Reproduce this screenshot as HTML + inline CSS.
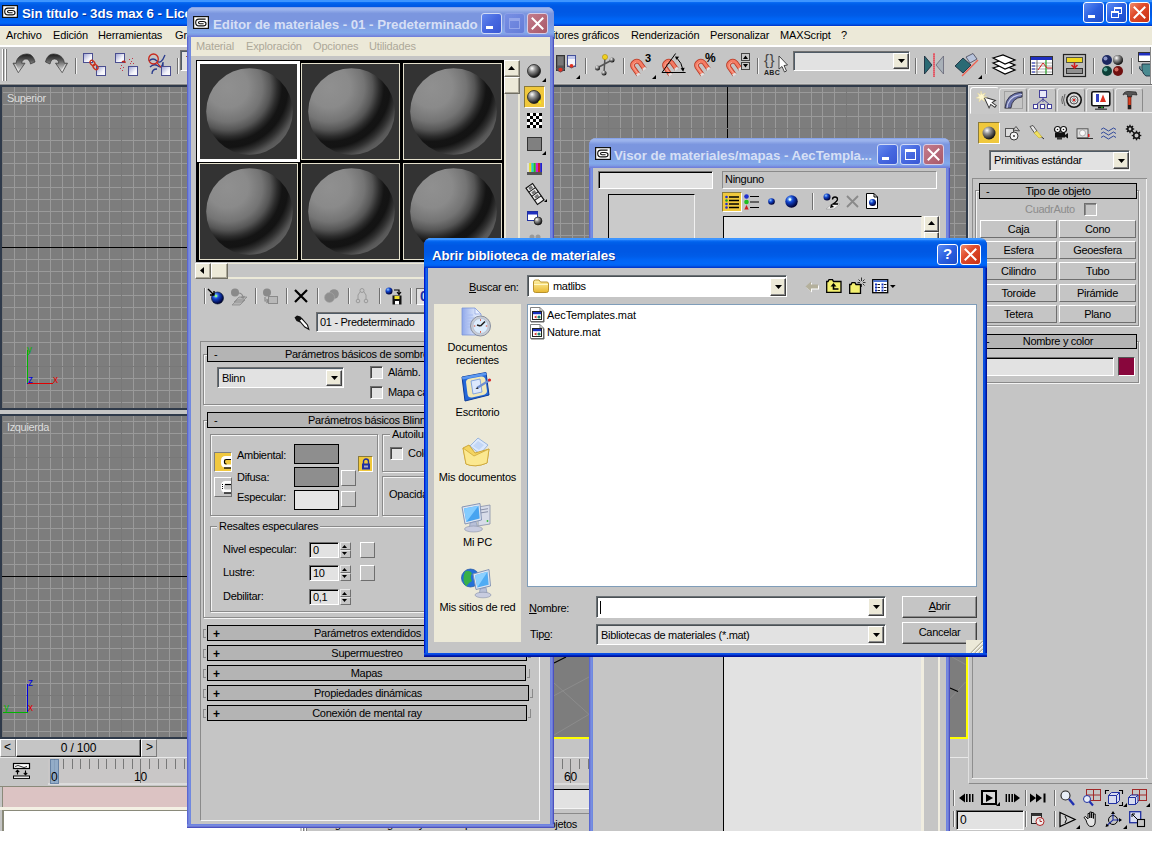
<!DOCTYPE html><html lang="es"><head><meta charset="utf-8"><title>3ds max 6</title><style>
*{box-sizing:border-box}
html,body{margin:0;padding:0}
body{background:#fff;width:1152px;height:864px;overflow:hidden;position:relative;font:11px "Liberation Sans",sans-serif;color:#000}
.a{position:absolute}
.t{position:absolute;white-space:nowrap;line-height:13px;letter-spacing:-0.3px}
.m{position:absolute;white-space:nowrap;line-height:13px;letter-spacing:-0.15px}
.tt{position:absolute;white-space:nowrap;font-weight:bold;font-size:13.3px;line-height:15px;color:#fff;letter-spacing:-0.05px;text-shadow:1px 1px 0 rgba(10,30,120,0.7)}
.c{text-align:center}
.btn{background:#c5c5c5;border:1px solid;border-color:#fff #6e6e6e #6e6e6e #fff;text-align:center;line-height:17px;letter-spacing:-0.3px}
.sunk{border:1px solid;border-color:#6e6e6e #fff #fff #6e6e6e}
.fld{background:#e2e2e2;border:1px solid;border-color:#707070 #fff #fff #707070;box-shadow:inset 1px 1px 0 #000}
.cmb{background:#e2e2e2;border:1px solid;border-color:#707070 #fff #fff #707070;box-shadow:inset 1px 1px 0 #4f5b66}
.roll{background:#b4b4b4;border:1px solid #000;text-align:center;line-height:15px;letter-spacing:-0.3px}
.grp{border:1px solid #8a8a8a;box-shadow:1px 1px 0 #f4f4f4, inset 1px 1px 0 #f4f4f4}
.vsep{position:absolute;width:2px;border-left:1px solid #707070;border-right:1px solid #f4f4f4}
.xpbtn{position:absolute;border:1px solid #fff;border-radius:3px}
svg{position:absolute;overflow:visible}
</style></head><body>
<div class="a mainwin" style="left:0px;top:0px;width:1152px;height:831px;background:#c5c5c5;overflow:hidden"></div>
<div class="a " style="left:0px;top:0px;width:1152px;height:26px;background:linear-gradient(180deg,#3d95ff 0%,#3d95ff 6%,#0a6cf4 9%,#0060ea 15%,#0058e4 25%,#0058e4 45%,#005ce8 60%,#0064f4 72%,#0068fa 86%,#0060f0 92%,#0048d8 96%,#0030c8 100%)"></div>
<svg style="left:2px;top:5px" width="16" height="13" viewBox="0 0 16 13"><rect x="0.6" y="0.6" width="14.8" height="11.8" fill="#fff" stroke="#111" stroke-width="1.2"/><path d="M12.6 3.1 H6 Q2.700 3.100 2.700 6.500 Q2.700 9.900 6 9.900 H10.200 Q13 9.900 13 7.700 Q13 5.500 10.200 5.500 H7 Q5.500 5.500 5.500 6.600 Q5.500 7.700 7 7.700 H10.600" fill="none" stroke="#111" stroke-width="1.15"/></svg>
<div class="a " style="left:22px;top:0px;width:165px;height:26px;overflow:hidden"><div class="tt" style="left:0px;top:6px;">Sin título - 3ds max 6 - Licencia autónoma</div></div>
<div class="xpbtn" style="left:1083px;top:2px;width:21px;height:21px;background:linear-gradient(135deg,#5c8cf4 0%,#2a5fe0 50%,#1d4cc8 100%);"><div class="a" style="left:4px;bottom:4px;width:7px;height:3px;background:#fff"></div></div>
<div class="xpbtn" style="left:1106px;top:2px;width:21px;height:21px;background:linear-gradient(135deg,#5c8cf4 0%,#2a5fe0 50%,#1d4cc8 100%);"><div class="a" style="left:7px;top:4px;width:8px;height:7px;border:1px solid #fff;border-top-width:2px"></div><div class="a" style="left:4px;top:8px;width:8px;height:7px;border:1px solid #fff;border-top-width:2px;background:#2a5fe0"></div></div>
<div class="xpbtn" style="left:1129px;top:2px;width:21px;height:21px;background:linear-gradient(135deg,#f08c6c 0%,#e04c2c 40%,#c83014 100%);"><svg style="left:0;top:0" width="19" height="19" viewBox="0 0 19 19"><path d="M4.5 4.5L14.5 14.5M14.5 4.5L4.5 14.5" stroke="#fff" stroke-width="2" stroke-linecap="square"/></svg></div>
<div class="a " style="left:0px;top:26px;width:1152px;height:19px;background:#ece9d8;border-top:1px solid #fbf4da"></div>
<div class="m" style="left:6px;top:29px;">Archivo</div>
<div class="m" style="left:53px;top:29px;">Edición</div>
<div class="m" style="left:98px;top:29px;">Herramientas</div>
<div class="m" style="left:175px;top:29px;">Grupo</div>
<div class="m" style="left:631px;top:29px;">Renderización</div>
<div class="m" style="left:710px;top:29px;">Personalizar</div>
<div class="m" style="left:780px;top:29px;">MAXScript</div>
<div class="m" style="left:841px;top:29px;">?</div>
<div class="a " style="left:419px;top:29px;width:200px;height:13px;text-align:right;white-space:nowrap;line-height:13px;letter-spacing:-0.15px">Editores gráficos</div>
<div class="a " style="left:0px;top:45px;width:1152px;height:2px;background:#fff"></div>
<div class="a " style="left:0px;top:83px;width:1152px;height:1px;background:#cbcbcb"></div>
<div class="a " style="left:0px;top:84px;width:968px;height:1px;background:#8c8c8c"></div>
<div class="a " style="left:968px;top:84px;width:184px;height:1px;background:#6e6e6e"></div>
<div class="a " style="left:2px;top:49px;width:2px;height:32px;border-left:1px solid #fff;border-right:1px solid #7a7a7a"></div>
<div class="a " style="left:5px;top:49px;width:2px;height:32px;border-left:1px solid #fff;border-right:1px solid #7a7a7a"></div>
<div class="vsep" style="left:75px;top:58px;height:16px"></div>
<div class="vsep" style="left:177px;top:58px;height:16px"></div>
<div class="vsep" style="left:585px;top:58px;height:16px"></div>
<div class="vsep" style="left:623px;top:58px;height:16px"></div>
<div class="vsep" style="left:757px;top:58px;height:16px"></div>
<div class="vsep" style="left:915px;top:58px;height:16px"></div>
<div class="vsep" style="left:985px;top:58px;height:16px"></div>
<div class="vsep" style="left:1023px;top:58px;height:16px"></div>
<div class="vsep" style="left:1093px;top:58px;height:16px"></div>
<div class="vsep" style="left:1131px;top:58px;height:16px"></div>
<svg width="0" height="0" style="left:0;top:0"><defs><linearGradient id="gUndo" x1="0" y1="0" x2="0" y2="1"><stop offset="0" stop-color="#1c1c1c"/><stop offset="0.35" stop-color="#5a5a5a"/><stop offset="0.7" stop-color="#b0b0b0"/><stop offset="1" stop-color="#f0f0f0"/></linearGradient><linearGradient id="gBox" x1="0" y1="0" x2="1" y2="1"><stop offset="0" stop-color="#9aa0d0"/><stop offset="0.6" stop-color="#f4f4fa"/><stop offset="1" stop-color="#fff"/></linearGradient><radialGradient id="gSph" cx="0.25" cy="0.22" r="0.95"><stop offset="0" stop-color="#909090"/><stop offset="0.25" stop-color="#8a8a8a"/><stop offset="0.42" stop-color="#747474"/><stop offset="0.52" stop-color="#565656"/><stop offset="0.6" stop-color="#2c2c2c"/><stop offset="0.66" stop-color="#141414"/><stop offset="0.73" stop-color="#131313"/><stop offset="0.8" stop-color="#303030"/><stop offset="0.87" stop-color="#565656"/><stop offset="0.95" stop-color="#666666"/><stop offset="1" stop-color="#6a6a6a"/></radialGradient><radialGradient id="gBall" cx="0.35" cy="0.3" r="0.7"><stop offset="0" stop-color="#fff"/><stop offset="0.35" stop-color="#999"/><stop offset="1" stop-color="#111"/></radialGradient><radialGradient id="gBlue" cx="0.35" cy="0.3" r="0.7"><stop offset="0" stop-color="#9cf"/><stop offset="0.4" stop-color="#14c"/><stop offset="1" stop-color="#003"/></radialGradient><linearGradient id="gFolder" x1="0" y1="0" x2="0" y2="1"><stop offset="0" stop-color="#fff3a8"/><stop offset="1" stop-color="#e8b830"/></linearGradient></defs></svg>
<svg style="left:13px;top:54px" width="23" height="20" viewBox="0 0 23 20"><path d="M5.300 18.700 L0 9.200 L3.200 9.200 C3.500 3 9 0 14 0 C18.500 0 21 3.500 22 8 L17.500 10 C17 7 15.500 5 13 5 C10.500 5 8.800 7 8.700 9.200 L12 9.200 Z" fill="url(#gUndo)" stroke="#333" stroke-width="0.700"/><path d="M2 10 L5.500 16.500" stroke="#fff" stroke-width="0.800" opacity="0.700"/></svg>
<svg style="left:45px;top:54px" width="23" height="20" viewBox="0 0 23 20"><g transform="translate(22.500,0) scale(-1,1)"><path d="M5.300 18.700 L0 9.200 L3.200 9.200 C3.500 3 9 0 14 0 C18.500 0 21 3.500 22 8 L17.500 10 C17 7 15.500 5 13 5 C10.500 5 8.800 7 8.700 9.200 L12 9.200 Z" fill="url(#gUndo)" stroke="#333" stroke-width="0.700"/><path d="M2 10 L5.500 16.500" stroke="#fff" stroke-width="0.800" opacity="0.700"/></g></svg>
<svg style="left:83px;top:53px" width="23" height="24" viewBox="0 0 23 24"><rect x="0.5" y="0.5" width="9" height="9" fill="url(#gBox)" stroke="#4a4e90" stroke-width="1"/><rect x="13.5" y="13.5" width="9" height="9" fill="url(#gBox)" stroke="#4a4e90" stroke-width="1"/><g fill="none" stroke="#c8301c" stroke-width="1.300"><ellipse cx="9.500" cy="10" rx="2" ry="3" transform="rotate(-40 9.500 10)"/><ellipse cx="12.500" cy="14" rx="2" ry="3" transform="rotate(-40 12.500 14)"/></g></svg>
<svg style="left:115px;top:53px" width="23" height="24" viewBox="0 0 23 24"><rect x="0.5" y="0.5" width="9" height="9" fill="url(#gBox)" stroke="#4a4e90" stroke-width="1"/><rect x="13.5" y="13.5" width="9" height="9" fill="url(#gBox)" stroke="#4a4e90" stroke-width="1"/><path d="M7 9 q3 -2 3 1" fill="none" stroke="#c0281c" stroke-width="1.6"/><g fill="#c0384a"><rect x="6" y="12" width="1" height="1"/><rect x="8" y="14" width="1" height="1"/><rect x="5" y="15" width="1" height="1"/><rect x="7" y="17" width="1" height="1"/><rect x="14" y="6" width="1" height="1"/><rect x="16" y="8" width="1" height="1"/><rect x="17" y="5" width="1" height="1"/><rect x="15" y="10" width="1" height="1"/><rect x="18" y="10" width="1" height="1"/></g></svg>
<svg style="left:148px;top:53px" width="23" height="24" viewBox="0 0 23 24"><path d="M1 8 q4 -4 8 0 t8 -6" fill="none" stroke="#283a8c" stroke-width="1.3"/><path d="M2 14 q4 -4 8 -1 t5 -4 v4" fill="none" stroke="#283a8c" stroke-width="1.3"/><path d="M4 21 q0 -5 5 -5" fill="none" stroke="#283a8c" stroke-width="1.3"/><ellipse cx="5.500" cy="6" rx="4.800" ry="5" fill="none" stroke="#c8281c" stroke-width="1.300"/><path d="M9 9.500 q2 3 4.500 5" fill="none" stroke="#c8281c" stroke-width="1.300"/><rect x="13.5" y="13.5" width="9" height="9" fill="url(#gBox)" stroke="#4a4e90" stroke-width="1"/></svg>
<div class="a cmb" style="left:180px;top:50px;width:40px;height:21px;"></div>
<div class="t" style="left:186px;top:54px;">Todo</div>
<svg style="left:556px;top:55px" width="22" height="22" viewBox="0 0 22 22"><rect x="0.5" y="0.5" width="8" height="15" fill="#555" stroke="#333"/><rect x="1.5" y="1.5" width="6" height="9" fill="#777"/><circle cx="4.5" cy="15" r="2.2" fill="#e03020"/><path d="M0 13 q4.5 8 9 0" fill="none" stroke="#556" stroke-width="0.8"/><rect x="11.5" y="0.5" width="8" height="11" fill="#f4f4fa" stroke="#44509a"/><rect x="12" y="1" width="7" height="3" fill="#c0c8ec"/><circle cx="15.5" cy="11" r="2" fill="#e03020"/><path d="M11 9 q4.5 8 9 0" fill="none" stroke="#556" stroke-width="0.8"/></svg>
<svg style="left:576px;top:75px" width="4" height="4" viewBox="0 0 4 4"><path d="M4 0V4H0Z" fill="#000"/></svg>
<svg style="left:595px;top:54px" width="20" height="22" viewBox="0 0 20 22"><path d="M10 3 L9 19 M2 14 L17 6" stroke="#555" stroke-width="1.5"/><circle cx="10" cy="3" r="2.6" fill="#f0d020" stroke="#a08000" stroke-width="0.5"/><circle cx="2.5" cy="14" r="2.5" fill="url(#gBall)"/><circle cx="17" cy="6" r="2.5" fill="url(#gBall)"/><circle cx="9" cy="19" r="2.5" fill="url(#gBall)"/></svg>
<svg style="left:630px;top:59px" width="18" height="18" viewBox="0 0 18 18"><g fill="none"><path d="M8.5 15.8 L3 8.2 A4.2 4.2 0 0 1 9.8 3.5 L14.6 10.2" stroke="#b83824" stroke-width="4.6"/><path d="M8.5 15.8 L3 8.2 A4.2 4.2 0 0 1 9.8 3.5 L14.6 10.2" stroke="#f47c64" stroke-width="3"/><path d="M7.6 14.2 L3.4 8.4 A3.6 3.6 0 0 1 6 3.4" stroke="#f8a898" stroke-width="1"/><path d="M8.8 16.2 L7.6 14.5 M14.9 10.6 L13.7 8.9" stroke="#fff" stroke-width="3.6"/><path d="M8.8 16.2 L7.6 14.5 M14.9 10.6 L13.7 8.9" stroke="#888" stroke-width="4.6" stroke-opacity="0.25"/></g></svg>
<div class="a" style="left:645px;top:52px;font:bold 11px/12px 'Liberation Sans',sans-serif">3</div>
<svg style="left:652px;top:75px" width="4" height="4" viewBox="0 0 4 4"><path d="M4 0V4H0Z" fill="#000"/></svg>
<svg style="left:662px;top:59px" width="18" height="18" viewBox="0 0 18 18"><g fill="none"><path d="M8.5 15.8 L3 8.2 A4.2 4.2 0 0 1 9.8 3.5 L14.6 10.2" stroke="#b83824" stroke-width="4.6"/><path d="M8.5 15.8 L3 8.2 A4.2 4.2 0 0 1 9.8 3.5 L14.6 10.2" stroke="#f47c64" stroke-width="3"/><path d="M7.6 14.2 L3.4 8.4 A3.6 3.6 0 0 1 6 3.4" stroke="#f8a898" stroke-width="1"/><path d="M8.8 16.2 L7.6 14.5 M14.9 10.6 L13.7 8.9" stroke="#fff" stroke-width="3.6"/><path d="M8.8 16.2 L7.6 14.5 M14.9 10.6 L13.7 8.9" stroke="#888" stroke-width="4.6" stroke-opacity="0.25"/></g><path d="M0 13.5 H23.600 M0 13.500 L13.600 -5.500" stroke="#000" stroke-width="1" fill="none"/><path d="M14.500 -1.500 Q20 4 21 11" stroke="#000" stroke-width="1" fill="none"/><path d="M13 -2.500 l4.200 0.300 l-2.800 3z M21.200 12.800 l-2.600 -3.600 l4 -0.400z" fill="#000"/></svg>
<svg style="left:694px;top:59px" width="18" height="18" viewBox="0 0 18 18"><g fill="none"><path d="M8.5 15.8 L3 8.2 A4.2 4.2 0 0 1 9.8 3.5 L14.6 10.2" stroke="#b83824" stroke-width="4.6"/><path d="M8.5 15.8 L3 8.2 A4.2 4.2 0 0 1 9.8 3.5 L14.6 10.2" stroke="#f47c64" stroke-width="3"/><path d="M7.6 14.2 L3.4 8.4 A3.6 3.6 0 0 1 6 3.4" stroke="#f8a898" stroke-width="1"/><path d="M8.8 16.2 L7.6 14.5 M14.9 10.6 L13.7 8.9" stroke="#fff" stroke-width="3.6"/><path d="M8.8 16.2 L7.6 14.5 M14.9 10.6 L13.7 8.9" stroke="#888" stroke-width="4.6" stroke-opacity="0.25"/></g></svg>
<div class="a" style="left:705px;top:52px;font:bold 12px/12px 'Liberation Sans',sans-serif;letter-spacing:-0.5px">%</div>
<svg style="left:726px;top:59px" width="18" height="18" viewBox="0 0 18 18"><g fill="none"><path d="M8.5 15.8 L3 8.2 A4.2 4.2 0 0 1 9.8 3.5 L14.6 10.2" stroke="#b83824" stroke-width="4.6"/><path d="M8.5 15.8 L3 8.2 A4.2 4.2 0 0 1 9.8 3.5 L14.6 10.2" stroke="#f47c64" stroke-width="3"/><path d="M7.6 14.2 L3.4 8.4 A3.6 3.6 0 0 1 6 3.4" stroke="#f8a898" stroke-width="1"/><path d="M8.8 16.2 L7.6 14.5 M14.9 10.6 L13.7 8.9" stroke="#fff" stroke-width="3.6"/><path d="M8.8 16.2 L7.6 14.5 M14.9 10.6 L13.7 8.9" stroke="#888" stroke-width="4.6" stroke-opacity="0.25"/></g></svg>
<div class="a " style="left:741px;top:53px;width:9px;height:8px;background:#c8c8c8;border:1px solid #444"><svg style="left:1px;top:1px" width="5" height="4"><path d="M0 4L2.500 0.500L5 4Z" fill="#000"/></svg></div>
<div class="a " style="left:741px;top:62px;width:9px;height:8px;background:#c8c8c8;border:1px solid #444"><svg style="left:1px;top:1px" width="5" height="4"><path d="M0 0L2.500 3.500L5 0Z" fill="#000"/></svg></div>
<div class="a" style="left:764px;top:50px;font:15px/20px 'Liberation Sans',sans-serif;color:#444;letter-spacing:0.5px">{}</div>
<div class="a" style="left:764px;top:69px;font:bold 7px/8px 'Liberation Sans',sans-serif;color:#222;letter-spacing:0.3px">ABC</div>
<svg style="left:778px;top:56px" width="10" height="18" viewBox="0 0 10 18"><path d="M1 0 L1 13 L4 10.5 L6.5 16 L8.5 15 L6 9.5 L9.5 9 Z" fill="#fff" stroke="#333" stroke-width="0.9"/></svg>
<div class="a cmb" style="left:793px;top:51px;width:117px;height:20px;"></div>
<div class="a " style="left:893px;top:53px;width:16px;height:16px;background:#ece9d8;border:1px solid;border-color:#fff #404040 #404040 #fff;box-shadow:inset -1px -1px 0 #8a8a8a"><svg style="left:3.5px;top:5.0px" width="7" height="4"><path d="M0 0H7L3.5 4Z" fill="#000"/></svg></div>
<svg style="left:923px;top:53px" width="22" height="24" viewBox="0 0 22 24"><path d="M1.5 3 V21 L9 12Z" fill="#2a6a74" stroke="#123" stroke-width="0.8"/><path d="M20.5 3 V21 L13 12Z" fill="#a8b0b8" stroke="#667" stroke-width="0.8"/><path d="M11 0 V24" stroke="#e04050" stroke-width="1.6"/><path d="M11 0 V24" stroke="#f8c0c0" stroke-width="0.5" stroke-dasharray="1 1"/></svg>
<svg style="left:954px;top:53px" width="24" height="24" viewBox="0 0 24 24"><path d="M1 13 L9 5 L17 12 L9 20Z" fill="#2a6a74" stroke="#123" stroke-width="0.8"/><path d="M12 4 L19 0.5 L23 6 L16 10Z" fill="#b8c4dc" stroke="#445" stroke-width="0.8"/><path d="M8 23 L24 7" stroke="#f06050" stroke-width="1.3"/></svg>
<svg style="left:978px;top:75px" width="4" height="4" viewBox="0 0 4 4"><path d="M4 0V4H0Z" fill="#000"/></svg>
<svg style="left:992px;top:54px" width="24" height="22" viewBox="0 0 24 22"><g fill="#fff" stroke="#000" stroke-width="1.2"><path d="M1 14 L11 11 L23 16 L13 20Z"/><path d="M1 9 L11 6 L23 11 L13 15Z"/><path d="M1 4 L11 1 L23 6 L13 10Z"/></g></svg>
<svg style="left:1030px;top:56px" width="23" height="19" viewBox="0 0 23 19"><rect x="0.5" y="0.5" width="22" height="18" fill="#fff" stroke="#333"/><rect x="1" y="1" width="21" height="3" fill="#2030c0"/><path d="M1 7H22M1 10H22M1 13H22M1 16H22" stroke="#888" stroke-width="0.7"/><path d="M7 4V18" stroke="#555" stroke-width="0.8"/><path d="M16 4V18" stroke="#20a020" stroke-width="1.2"/><path d="M8 14 L13 7 L17 12 L22 12" fill="none" stroke="#d02020" stroke-width="1"/><path d="M2 7h3M2 10h3M2 13h3M2 16h3" stroke="#2030c0" stroke-width="1"/></svg>
<svg style="left:1063px;top:54px" width="23" height="23" viewBox="0 0 23 23"><rect x="0.5" y="0.5" width="22" height="22" fill="#bdbdbd" stroke="#222" stroke-width="1.2"/><rect x="3.5" y="3.5" width="16" height="5" fill="#f0d820" stroke="#554"/><rect x="3.5" y="14.5" width="16" height="5" fill="#909090" stroke="#333"/><path d="M11.5 8.5 V13 M8.5 11 L11.5 14 L14.5 11" stroke="#d02020" stroke-width="1.6" fill="none"/></svg>
<svg style="left:1101px;top:54px" width="22" height="22" viewBox="0 0 22 22"><circle cx="6" cy="6" r="5" fill="#1c2860"/><circle cx="4.5" cy="4.5" r="2" fill="#a8b0e0" opacity="0.8"/><circle cx="17" cy="6" r="5" fill="#707070"/><circle cx="15.5" cy="4.5" r="2" fill="#fff" opacity="0.8"/><circle cx="6" cy="17" r="5" fill="#0c4038"/><circle cx="4.5" cy="15.5" r="2" fill="#70c0b0" opacity="0.8"/><circle cx="17" cy="17" r="5" fill="#701010"/><circle cx="15.5" cy="15.5" r="2" fill="#f08070" opacity="0.8"/><circle cx="17" cy="6" r="5" fill="url(#gBall)"/></svg>
<svg style="left:1138px;top:52px" width="14" height="26" viewBox="0 0 14 26"><rect x="0.5" y="0.5" width="14" height="9" fill="#fff" stroke="#333"/><rect x="1" y="1" width="13" height="2.5" fill="#2030c0"/><path d="M2 14 q-2 3 2 5 M4 12 h10 v12 h-6 q-5 -3 -4 -12Z" fill="#4a8a90" stroke="#123" stroke-width="0.8"/></svg>
<div class="a " style="left:1150px;top:47px;width:2px;height:37px;border-left:1px solid #8a8a8a;border-right:1px solid #fff"></div>
<div class="a " style="left:0px;top:85px;width:484px;height:325px;background:#7d7d7d;border:2px solid #2f3a4a;overflow:hidden"><div class="a" style="left:12px;top:0;width:1px;height:100%;background:#9a9a9a"></div><div class="a" style="left:24px;top:0;width:1px;height:100%;background:#9a9a9a"></div><div class="a" style="left:36px;top:0;width:1px;height:100%;background:#9a9a9a"></div><div class="a" style="left:48px;top:0;width:1px;height:100%;background:#9a9a9a"></div><div class="a" style="left:60px;top:0;width:1px;height:100%;background:#9a9a9a"></div><div class="a" style="left:71px;top:0;width:1px;height:100%;background:#9a9a9a"></div><div class="a" style="left:83px;top:0;width:1px;height:100%;background:#9a9a9a"></div><div class="a" style="left:95px;top:0;width:1px;height:100%;background:#9a9a9a"></div><div class="a" style="left:107px;top:0;width:1px;height:100%;background:#9a9a9a"></div><div class="a" style="left:131px;top:0;width:1px;height:100%;background:#9a9a9a"></div><div class="a" style="left:143px;top:0;width:1px;height:100%;background:#9a9a9a"></div><div class="a" style="left:155px;top:0;width:1px;height:100%;background:#9a9a9a"></div><div class="a" style="left:167px;top:0;width:1px;height:100%;background:#9a9a9a"></div><div class="a" style="left:179px;top:0;width:1px;height:100%;background:#9a9a9a"></div><div class="a" style="left:191px;top:0;width:1px;height:100%;background:#9a9a9a"></div><div class="a" style="left:203px;top:0;width:1px;height:100%;background:#9a9a9a"></div><div class="a" style="left:215px;top:0;width:1px;height:100%;background:#9a9a9a"></div><div class="a" style="left:227px;top:0;width:1px;height:100%;background:#9a9a9a"></div><div class="a" style="left:250px;top:0;width:1px;height:100%;background:#9a9a9a"></div><div class="a" style="left:262px;top:0;width:1px;height:100%;background:#9a9a9a"></div><div class="a" style="left:274px;top:0;width:1px;height:100%;background:#9a9a9a"></div><div class="a" style="left:286px;top:0;width:1px;height:100%;background:#9a9a9a"></div><div class="a" style="left:298px;top:0;width:1px;height:100%;background:#9a9a9a"></div><div class="a" style="left:310px;top:0;width:1px;height:100%;background:#9a9a9a"></div><div class="a" style="left:322px;top:0;width:1px;height:100%;background:#9a9a9a"></div><div class="a" style="left:334px;top:0;width:1px;height:100%;background:#9a9a9a"></div><div class="a" style="left:346px;top:0;width:1px;height:100%;background:#9a9a9a"></div><div class="a" style="left:370px;top:0;width:1px;height:100%;background:#9a9a9a"></div><div class="a" style="left:382px;top:0;width:1px;height:100%;background:#9a9a9a"></div><div class="a" style="left:394px;top:0;width:1px;height:100%;background:#9a9a9a"></div><div class="a" style="left:406px;top:0;width:1px;height:100%;background:#9a9a9a"></div><div class="a" style="left:417px;top:0;width:1px;height:100%;background:#9a9a9a"></div><div class="a" style="left:429px;top:0;width:1px;height:100%;background:#9a9a9a"></div><div class="a" style="left:441px;top:0;width:1px;height:100%;background:#9a9a9a"></div><div class="a" style="left:453px;top:0;width:1px;height:100%;background:#9a9a9a"></div><div class="a" style="left:465px;top:0;width:1px;height:100%;background:#9a9a9a"></div><div class="a" style="left:0;top:5px;height:1px;width:100%;background:#9a9a9a"></div><div class="a" style="left:0;top:17px;height:1px;width:100%;background:#9a9a9a"></div><div class="a" style="left:0;top:29px;height:1px;width:100%;background:#9a9a9a"></div><div class="a" style="left:0;top:53px;height:1px;width:100%;background:#9a9a9a"></div><div class="a" style="left:0;top:65px;height:1px;width:100%;background:#9a9a9a"></div><div class="a" style="left:0;top:76px;height:1px;width:100%;background:#9a9a9a"></div><div class="a" style="left:0;top:88px;height:1px;width:100%;background:#9a9a9a"></div><div class="a" style="left:0;top:100px;height:1px;width:100%;background:#9a9a9a"></div><div class="a" style="left:0;top:112px;height:1px;width:100%;background:#9a9a9a"></div><div class="a" style="left:0;top:124px;height:1px;width:100%;background:#9a9a9a"></div><div class="a" style="left:0;top:136px;height:1px;width:100%;background:#9a9a9a"></div><div class="a" style="left:0;top:148px;height:1px;width:100%;background:#9a9a9a"></div><div class="a" style="left:0;top:172px;height:1px;width:100%;background:#9a9a9a"></div><div class="a" style="left:0;top:184px;height:1px;width:100%;background:#9a9a9a"></div><div class="a" style="left:0;top:196px;height:1px;width:100%;background:#9a9a9a"></div><div class="a" style="left:0;top:208px;height:1px;width:100%;background:#9a9a9a"></div><div class="a" style="left:0;top:220px;height:1px;width:100%;background:#9a9a9a"></div><div class="a" style="left:0;top:232px;height:1px;width:100%;background:#9a9a9a"></div><div class="a" style="left:0;top:244px;height:1px;width:100%;background:#9a9a9a"></div><div class="a" style="left:0;top:255px;height:1px;width:100%;background:#9a9a9a"></div><div class="a" style="left:0;top:267px;height:1px;width:100%;background:#9a9a9a"></div><div class="a" style="left:0;top:291px;height:1px;width:100%;background:#9a9a9a"></div><div class="a" style="left:0;top:303px;height:1px;width:100%;background:#9a9a9a"></div><div class="a" style="left:0;top:315px;height:1px;width:100%;background:#9a9a9a"></div><div class="a" style="left:0px;top:0;width:1px;height:100%;background:#787878"></div><div class="a" style="left:119px;top:0;width:1px;height:100%;background:#787878"></div><div class="a" style="left:239px;top:0;width:1px;height:100%;background:#000"></div><div class="a" style="left:358px;top:0;width:1px;height:100%;background:#787878"></div><div class="a" style="left:477px;top:0;width:1px;height:100%;background:#787878"></div><div class="a" style="left:0;top:41px;height:1px;width:100%;background:#787878"></div><div class="a" style="left:0;top:160px;height:1px;width:100%;background:#000"></div><div class="a" style="left:0;top:279px;height:1px;width:100%;background:#787878"></div><div class="t" style="left:5px;top:5px;color:#dcdcdc;letter-spacing:-0.35px">Superior</div><div class="a" style="left:25px;top:263px;width:1px;height:33px;background:#00b400"></div><div class="a" style="left:25px;top:296px;width:26px;height:1px;background:#e00000"></div><div class="a" style="left:25px;top:296px;width:1px;height:1px;background:#0000e0"></div><div class="t" style="left:26px;top:288px;color:#0000e0;font-size:10px;line-height:10px">z</div><div class="t" style="left:51px;top:288px;color:#e00000;font-size:10px;line-height:10px">x</div><div class="t" style="left:25px;top:258px;color:#00b400;font-size:10px;line-height:10px">y</div></div>
<div class="a " style="left:0px;top:414px;width:484px;height:325px;background:#7d7d7d;border:2px solid #2f3a4a;overflow:hidden"><div class="a" style="left:12px;top:0;width:1px;height:100%;background:#9a9a9a"></div><div class="a" style="left:24px;top:0;width:1px;height:100%;background:#9a9a9a"></div><div class="a" style="left:36px;top:0;width:1px;height:100%;background:#9a9a9a"></div><div class="a" style="left:48px;top:0;width:1px;height:100%;background:#9a9a9a"></div><div class="a" style="left:60px;top:0;width:1px;height:100%;background:#9a9a9a"></div><div class="a" style="left:71px;top:0;width:1px;height:100%;background:#9a9a9a"></div><div class="a" style="left:83px;top:0;width:1px;height:100%;background:#9a9a9a"></div><div class="a" style="left:95px;top:0;width:1px;height:100%;background:#9a9a9a"></div><div class="a" style="left:107px;top:0;width:1px;height:100%;background:#9a9a9a"></div><div class="a" style="left:131px;top:0;width:1px;height:100%;background:#9a9a9a"></div><div class="a" style="left:143px;top:0;width:1px;height:100%;background:#9a9a9a"></div><div class="a" style="left:155px;top:0;width:1px;height:100%;background:#9a9a9a"></div><div class="a" style="left:167px;top:0;width:1px;height:100%;background:#9a9a9a"></div><div class="a" style="left:179px;top:0;width:1px;height:100%;background:#9a9a9a"></div><div class="a" style="left:191px;top:0;width:1px;height:100%;background:#9a9a9a"></div><div class="a" style="left:203px;top:0;width:1px;height:100%;background:#9a9a9a"></div><div class="a" style="left:215px;top:0;width:1px;height:100%;background:#9a9a9a"></div><div class="a" style="left:227px;top:0;width:1px;height:100%;background:#9a9a9a"></div><div class="a" style="left:250px;top:0;width:1px;height:100%;background:#9a9a9a"></div><div class="a" style="left:262px;top:0;width:1px;height:100%;background:#9a9a9a"></div><div class="a" style="left:274px;top:0;width:1px;height:100%;background:#9a9a9a"></div><div class="a" style="left:286px;top:0;width:1px;height:100%;background:#9a9a9a"></div><div class="a" style="left:298px;top:0;width:1px;height:100%;background:#9a9a9a"></div><div class="a" style="left:310px;top:0;width:1px;height:100%;background:#9a9a9a"></div><div class="a" style="left:322px;top:0;width:1px;height:100%;background:#9a9a9a"></div><div class="a" style="left:334px;top:0;width:1px;height:100%;background:#9a9a9a"></div><div class="a" style="left:346px;top:0;width:1px;height:100%;background:#9a9a9a"></div><div class="a" style="left:370px;top:0;width:1px;height:100%;background:#9a9a9a"></div><div class="a" style="left:382px;top:0;width:1px;height:100%;background:#9a9a9a"></div><div class="a" style="left:394px;top:0;width:1px;height:100%;background:#9a9a9a"></div><div class="a" style="left:406px;top:0;width:1px;height:100%;background:#9a9a9a"></div><div class="a" style="left:417px;top:0;width:1px;height:100%;background:#9a9a9a"></div><div class="a" style="left:429px;top:0;width:1px;height:100%;background:#9a9a9a"></div><div class="a" style="left:441px;top:0;width:1px;height:100%;background:#9a9a9a"></div><div class="a" style="left:453px;top:0;width:1px;height:100%;background:#9a9a9a"></div><div class="a" style="left:465px;top:0;width:1px;height:100%;background:#9a9a9a"></div><div class="a" style="left:0;top:5px;height:1px;width:100%;background:#9a9a9a"></div><div class="a" style="left:0;top:17px;height:1px;width:100%;background:#9a9a9a"></div><div class="a" style="left:0;top:29px;height:1px;width:100%;background:#9a9a9a"></div><div class="a" style="left:0;top:53px;height:1px;width:100%;background:#9a9a9a"></div><div class="a" style="left:0;top:65px;height:1px;width:100%;background:#9a9a9a"></div><div class="a" style="left:0;top:76px;height:1px;width:100%;background:#9a9a9a"></div><div class="a" style="left:0;top:88px;height:1px;width:100%;background:#9a9a9a"></div><div class="a" style="left:0;top:100px;height:1px;width:100%;background:#9a9a9a"></div><div class="a" style="left:0;top:112px;height:1px;width:100%;background:#9a9a9a"></div><div class="a" style="left:0;top:124px;height:1px;width:100%;background:#9a9a9a"></div><div class="a" style="left:0;top:136px;height:1px;width:100%;background:#9a9a9a"></div><div class="a" style="left:0;top:148px;height:1px;width:100%;background:#9a9a9a"></div><div class="a" style="left:0;top:172px;height:1px;width:100%;background:#9a9a9a"></div><div class="a" style="left:0;top:184px;height:1px;width:100%;background:#9a9a9a"></div><div class="a" style="left:0;top:196px;height:1px;width:100%;background:#9a9a9a"></div><div class="a" style="left:0;top:208px;height:1px;width:100%;background:#9a9a9a"></div><div class="a" style="left:0;top:220px;height:1px;width:100%;background:#9a9a9a"></div><div class="a" style="left:0;top:232px;height:1px;width:100%;background:#9a9a9a"></div><div class="a" style="left:0;top:244px;height:1px;width:100%;background:#9a9a9a"></div><div class="a" style="left:0;top:255px;height:1px;width:100%;background:#9a9a9a"></div><div class="a" style="left:0;top:267px;height:1px;width:100%;background:#9a9a9a"></div><div class="a" style="left:0;top:291px;height:1px;width:100%;background:#9a9a9a"></div><div class="a" style="left:0;top:303px;height:1px;width:100%;background:#9a9a9a"></div><div class="a" style="left:0;top:315px;height:1px;width:100%;background:#9a9a9a"></div><div class="a" style="left:0px;top:0;width:1px;height:100%;background:#787878"></div><div class="a" style="left:119px;top:0;width:1px;height:100%;background:#787878"></div><div class="a" style="left:239px;top:0;width:1px;height:100%;background:#000"></div><div class="a" style="left:358px;top:0;width:1px;height:100%;background:#787878"></div><div class="a" style="left:477px;top:0;width:1px;height:100%;background:#787878"></div><div class="a" style="left:0;top:41px;height:1px;width:100%;background:#787878"></div><div class="a" style="left:0;top:160px;height:1px;width:100%;background:#000"></div><div class="a" style="left:0;top:279px;height:1px;width:100%;background:#787878"></div><div class="t" style="left:5px;top:5px;color:#dcdcdc;letter-spacing:-0.35px">Izquierda</div><div class="a" style="left:25px;top:268px;width:1px;height:29px;background:#0000e0"></div><div class="a" style="left:1px;top:296px;width:25px;height:1px;background:#00b400"></div><div class="t" style="left:26px;top:287px;color:#e00000;font-size:10px;line-height:10px">x</div><div class="t" style="left:2px;top:287px;color:#00b400;font-size:10px;line-height:10px">y</div><div class="t" style="left:26px;top:262px;color:#0000e0;font-size:10px;line-height:10px">z</div></div>
<div class="a " style="left:488px;top:85px;width:480px;height:325px;background:#7d7d7d;border:2px solid #2f3a4a;overflow:hidden"><div class="a" style="left:10px;top:0;width:1px;height:100%;background:#9a9a9a"></div><div class="a" style="left:22px;top:0;width:1px;height:100%;background:#9a9a9a"></div><div class="a" style="left:34px;top:0;width:1px;height:100%;background:#9a9a9a"></div><div class="a" style="left:46px;top:0;width:1px;height:100%;background:#9a9a9a"></div><div class="a" style="left:58px;top:0;width:1px;height:100%;background:#9a9a9a"></div><div class="a" style="left:70px;top:0;width:1px;height:100%;background:#9a9a9a"></div><div class="a" style="left:82px;top:0;width:1px;height:100%;background:#9a9a9a"></div><div class="a" style="left:94px;top:0;width:1px;height:100%;background:#9a9a9a"></div><div class="a" style="left:106px;top:0;width:1px;height:100%;background:#9a9a9a"></div><div class="a" style="left:130px;top:0;width:1px;height:100%;background:#9a9a9a"></div><div class="a" style="left:142px;top:0;width:1px;height:100%;background:#9a9a9a"></div><div class="a" style="left:153px;top:0;width:1px;height:100%;background:#9a9a9a"></div><div class="a" style="left:165px;top:0;width:1px;height:100%;background:#9a9a9a"></div><div class="a" style="left:177px;top:0;width:1px;height:100%;background:#9a9a9a"></div><div class="a" style="left:189px;top:0;width:1px;height:100%;background:#9a9a9a"></div><div class="a" style="left:201px;top:0;width:1px;height:100%;background:#9a9a9a"></div><div class="a" style="left:213px;top:0;width:1px;height:100%;background:#9a9a9a"></div><div class="a" style="left:225px;top:0;width:1px;height:100%;background:#9a9a9a"></div><div class="a" style="left:249px;top:0;width:1px;height:100%;background:#9a9a9a"></div><div class="a" style="left:261px;top:0;width:1px;height:100%;background:#9a9a9a"></div><div class="a" style="left:273px;top:0;width:1px;height:100%;background:#9a9a9a"></div><div class="a" style="left:285px;top:0;width:1px;height:100%;background:#9a9a9a"></div><div class="a" style="left:297px;top:0;width:1px;height:100%;background:#9a9a9a"></div><div class="a" style="left:309px;top:0;width:1px;height:100%;background:#9a9a9a"></div><div class="a" style="left:321px;top:0;width:1px;height:100%;background:#9a9a9a"></div><div class="a" style="left:332px;top:0;width:1px;height:100%;background:#9a9a9a"></div><div class="a" style="left:344px;top:0;width:1px;height:100%;background:#9a9a9a"></div><div class="a" style="left:368px;top:0;width:1px;height:100%;background:#9a9a9a"></div><div class="a" style="left:380px;top:0;width:1px;height:100%;background:#9a9a9a"></div><div class="a" style="left:392px;top:0;width:1px;height:100%;background:#9a9a9a"></div><div class="a" style="left:404px;top:0;width:1px;height:100%;background:#9a9a9a"></div><div class="a" style="left:416px;top:0;width:1px;height:100%;background:#9a9a9a"></div><div class="a" style="left:428px;top:0;width:1px;height:100%;background:#9a9a9a"></div><div class="a" style="left:440px;top:0;width:1px;height:100%;background:#9a9a9a"></div><div class="a" style="left:452px;top:0;width:1px;height:100%;background:#9a9a9a"></div><div class="a" style="left:464px;top:0;width:1px;height:100%;background:#9a9a9a"></div><div class="a" style="left:0;top:5px;height:1px;width:100%;background:#9a9a9a"></div><div class="a" style="left:0;top:17px;height:1px;width:100%;background:#9a9a9a"></div><div class="a" style="left:0;top:29px;height:1px;width:100%;background:#9a9a9a"></div><div class="a" style="left:0;top:53px;height:1px;width:100%;background:#9a9a9a"></div><div class="a" style="left:0;top:65px;height:1px;width:100%;background:#9a9a9a"></div><div class="a" style="left:0;top:76px;height:1px;width:100%;background:#9a9a9a"></div><div class="a" style="left:0;top:88px;height:1px;width:100%;background:#9a9a9a"></div><div class="a" style="left:0;top:100px;height:1px;width:100%;background:#9a9a9a"></div><div class="a" style="left:0;top:112px;height:1px;width:100%;background:#9a9a9a"></div><div class="a" style="left:0;top:124px;height:1px;width:100%;background:#9a9a9a"></div><div class="a" style="left:0;top:136px;height:1px;width:100%;background:#9a9a9a"></div><div class="a" style="left:0;top:148px;height:1px;width:100%;background:#9a9a9a"></div><div class="a" style="left:0;top:172px;height:1px;width:100%;background:#9a9a9a"></div><div class="a" style="left:0;top:184px;height:1px;width:100%;background:#9a9a9a"></div><div class="a" style="left:0;top:196px;height:1px;width:100%;background:#9a9a9a"></div><div class="a" style="left:0;top:208px;height:1px;width:100%;background:#9a9a9a"></div><div class="a" style="left:0;top:220px;height:1px;width:100%;background:#9a9a9a"></div><div class="a" style="left:0;top:232px;height:1px;width:100%;background:#9a9a9a"></div><div class="a" style="left:0;top:244px;height:1px;width:100%;background:#9a9a9a"></div><div class="a" style="left:0;top:255px;height:1px;width:100%;background:#9a9a9a"></div><div class="a" style="left:0;top:267px;height:1px;width:100%;background:#9a9a9a"></div><div class="a" style="left:0;top:291px;height:1px;width:100%;background:#9a9a9a"></div><div class="a" style="left:0;top:303px;height:1px;width:100%;background:#9a9a9a"></div><div class="a" style="left:0;top:315px;height:1px;width:100%;background:#9a9a9a"></div><div class="a" style="left:118px;top:0;width:1px;height:100%;background:#787878"></div><div class="a" style="left:237px;top:0;width:1px;height:100%;background:#000"></div><div class="a" style="left:356px;top:0;width:1px;height:100%;background:#787878"></div><div class="a" style="left:0;top:41px;height:1px;width:100%;background:#787878"></div><div class="a" style="left:0;top:160px;height:1px;width:100%;background:#000"></div><div class="a" style="left:0;top:279px;height:1px;width:100%;background:#787878"></div></div>
<div class="a " style="left:488px;top:414px;width:480px;height:325px;background:#7d7d7d;border:2px solid #ffff00;overflow:hidden"><svg style="left:0;top:0" width="476" height="321"><path d="M64 279.700 L99 261 M64 267 L99 298.400 M64 319 L99 298.400 M460 282.800 L475.500 266 M462 241 L475.500 248.400" stroke="#8c8c8c" stroke-width="1"/><path d="M64 247 L76 241 M460 272 L468 275.500" stroke="#000" stroke-width="1.200"/></svg></div>
<div class="a " style="left:968px;top:85px;width:184px;height:1px;background:#e6e6e6"></div>
<div class="a " style="left:968px;top:85px;width:1px;height:698px;background:#e0e0e0"></div>
<div class="a " style="left:970px;top:87px;width:29px;height:27px;background:#c8c8c8;border:1px solid;border-color:#fff #c5c5c5 transparent #fff;border-radius:3px 3px 0 0"></div>
<div class="a " style="left:999px;top:88px;width:28px;height:24px;background:#c5c5c5;border:1px solid;border-color:#e8e8e8 #8a8a8a transparent #e8e8e8;border-radius:3px 3px 0 0"></div>
<div class="a " style="left:1028px;top:88px;width:28px;height:24px;background:#c5c5c5;border:1px solid;border-color:#e8e8e8 #8a8a8a transparent #e8e8e8;border-radius:3px 3px 0 0"></div>
<div class="a " style="left:1057px;top:88px;width:28px;height:24px;background:#c5c5c5;border:1px solid;border-color:#e8e8e8 #8a8a8a transparent #e8e8e8;border-radius:3px 3px 0 0"></div>
<div class="a " style="left:1086px;top:88px;width:28px;height:24px;background:#c5c5c5;border:1px solid;border-color:#e8e8e8 #8a8a8a transparent #e8e8e8;border-radius:3px 3px 0 0"></div>
<div class="a " style="left:1115px;top:88px;width:28px;height:24px;background:#c5c5c5;border:1px solid;border-color:#e8e8e8 #8a8a8a transparent #e8e8e8;border-radius:3px 3px 0 0"></div>
<div class="a " style="left:999px;top:112px;width:153px;height:1px;background:#f0f0f0"></div>
<svg style="left:976px;top:91px" width="20" height="20" viewBox="0 0 20 20"><path d="M8 6 L8 18 L11 15.5 L13.5 20 L15.5 19 L13 14.5 L17 14 Z" fill="#fff" stroke="#333" stroke-width="0.9" transform="rotate(-25 8 6)"/><path d="M5 0 L6 3.5 L9.5 2 L7.5 5 L11 6 L7.5 7 L8.5 10.5 L5.5 8 L3 11 L3.5 7.5 L0 7 L3.3 5.3 L1.5 2 L4.5 3.8Z" fill="#fff8d0" stroke="#e8d890" stroke-width="0.4"/></svg>
<svg style="left:1004px;top:91px" width="20" height="20" viewBox="0 0 20 20"><path d="M1 17 Q2 2 18 1 L18 6 Q8 7 7 17Z" fill="#6870a8" stroke="#223" stroke-width="0.8"/><path d="M3 17 Q4 5 18 3.5" stroke="#c8cce8" stroke-width="1.2" fill="none"/><rect x="0.5" y="0.5" width="18" height="17" fill="none" stroke="#333" stroke-width="0.5" stroke-dasharray="1 1"/></svg>
<svg style="left:1033px;top:90px" width="20" height="20" viewBox="0 0 20 20"><path d="M10 7 V12 M3 15 L10 9 L17 15" stroke="#44409a" stroke-width="1" fill="none"/><rect x="6.5" y="0.5" width="7" height="7" fill="#e8e8f8" stroke="#44409a"/><rect x="0.5" y="14.5" width="4" height="4" fill="#fff" stroke="#44409a"/><rect x="7.5" y="14.5" width="4" height="4" fill="#fff" stroke="#44409a"/><rect x="14.5" y="14.5" width="4" height="4" fill="#fff" stroke="#44409a"/></svg>
<svg style="left:1061px;top:91px" width="22" height="20" viewBox="0 0 22 20"><circle cx="13" cy="9" r="7.2" fill="#d8d8d8" stroke="#111" stroke-width="1.6"/><circle cx="13" cy="9" r="4" fill="#eee" stroke="#333" stroke-width="0.8"/><path d="M13 5V13M9 9H17M10.2 6.2L15.8 11.8M15.8 6.2L10.2 11.8" stroke="#555" stroke-width="0.6"/><circle cx="13" cy="9" r="1.2" fill="#e02020"/><path d="M4 3 Q1 9 4 15 M1.5 5 Q0 9 1.5 13" stroke="#555" stroke-width="0.9" fill="none"/></svg>
<svg style="left:1091px;top:91px" width="20" height="20" viewBox="0 0 20 20"><rect x="0.8" y="0.8" width="18" height="14" rx="1.5" fill="#fff" stroke="#111" stroke-width="1.6"/><rect x="5" y="3" width="3" height="8" fill="#3040c0"/><path d="M9 11 L12 3.5 L15 11Z" fill="#e03020"/><rect x="7" y="15.5" width="6" height="2" fill="#111"/><rect x="4" y="17.5" width="12" height="1.5" fill="#555"/><rect x="10" y="15.8" width="2" height="1" fill="#20c020"/></svg>
<svg style="left:1121px;top:90px" width="18" height="22" viewBox="0 0 18 22"><path d="M2 5 Q3 1 8 1.5 L15 2 L16 5 L11 4.5 L10.5 7 L6.5 7 L6.5 4.5 Q3.5 3.5 2 5Z" fill="#555" stroke="#222" stroke-width="0.7"/><rect x="7" y="7" width="3" height="12" fill="#d84020" stroke="#501008" stroke-width="0.6"/><rect x="7" y="15" width="3" height="4" fill="#222"/></svg>
<div class="a " style="left:978px;top:122px;width:22px;height:22px;background:#f0c83c;border:1px solid;border-color:#8a7a3a #fff #fff #8a7a3a"></div>
<svg style="left:982px;top:126px" width="14" height="14" viewBox="0 0 14 14"><circle cx="7" cy="7" r="6.5" fill="url(#gBall)"/></svg>
<svg style="left:1005px;top:126px" width="16" height="15" viewBox="0 0 16 15"><rect x="0.5" y="2.5" width="8" height="8" fill="#ddd" stroke="#555"/><path d="M8 4 L11 0.5 L14.5 5Z" fill="#ccc" stroke="#333" stroke-width="0.8"/><circle cx="9" cy="10" r="4" fill="#f4f4f4" stroke="#222" stroke-width="0.9"/><circle cx="9" cy="10" r="0.9" fill="#222"/></svg>
<svg style="left:1029px;top:125px" width="16" height="16" viewBox="0 0 16 16"><path d="M1 1.5 L4 0.5 L8 6 L5.5 8Z" fill="#e8e8e8" stroke="#333" stroke-width="0.8"/><path d="M6.5 7 L15 14" stroke="#333" stroke-width="1"/><path d="M5 8 L8 6 L13 12 L10 13Z" fill="#f0e060" stroke="#c0a820" stroke-width="0.5"/></svg>
<svg style="left:1053px;top:126px" width="16" height="14" viewBox="0 0 16 14"><circle cx="4.5" cy="3.5" r="3" fill="#fff" stroke="#111" stroke-width="1.2"/><circle cx="10.5" cy="3.5" r="3" fill="#fff" stroke="#111" stroke-width="1.2"/><circle cx="4.5" cy="3.5" r="0.8" fill="#111"/><circle cx="10.5" cy="3.5" r="0.8" fill="#111"/><rect x="2" y="6.5" width="10" height="5" fill="#111"/><path d="M12 9 L15 7 V12.5 L12 10.5Z" fill="#111"/><rect x="4" y="11" width="5" height="2.5" fill="#333"/></svg>
<svg style="left:1076px;top:128px" width="18" height="12" viewBox="0 0 18 12"><rect x="1" y="0.8" width="11" height="9" fill="#ddd" stroke="#555" stroke-width="1"/><circle cx="6.5" cy="5" r="3" fill="#f8f8f8" stroke="#888" stroke-width="0.6"/><rect x="12" y="6" width="1.5" height="3" fill="#e02020"/><path d="M1 10.5 H17" stroke="#333" stroke-width="1"/></svg>
<svg style="left:1100px;top:127px" width="18" height="13" viewBox="0 0 18 13"><path d="M1 2.5 q2.5 -3 5 0 t5 0 t5 0 M1 6.5 q2.5 -3 5 0 t5 0 t5 0 M1 10.5 q2.5 -3 5 0 t5 0 t5 0" fill="none" stroke="#30489a" stroke-width="1"/></svg>
<svg style="left:1125px;top:124px" width="18" height="18" viewBox="0 0 18 18"><path d="M6.7 5.0 L9.2 5.0" stroke="#111" stroke-width="1.4"/><path d="M6.2 6.2 L8.0 8.0" stroke="#111" stroke-width="1.4"/><path d="M5.0 6.7 L5.0 9.2" stroke="#111" stroke-width="1.4"/><path d="M3.8 6.2 L2.0 8.0" stroke="#111" stroke-width="1.4"/><path d="M3.3 5.0 L0.8 5.0" stroke="#111" stroke-width="1.4"/><path d="M3.8 3.8 L2.0 2.0" stroke="#111" stroke-width="1.4"/><path d="M5.0 3.3 L5.0 0.8" stroke="#111" stroke-width="1.4"/><path d="M6.2 3.8 L8.0 2.0" stroke="#111" stroke-width="1.4"/><circle cx="5" cy="5" r="2.2" fill="#c5c5c5" stroke="#111" stroke-width="1.6"/><path d="M13.8 11.5 L16.3 11.5" stroke="#111" stroke-width="1.4"/><path d="M13.1 13.1 L14.9 14.9" stroke="#111" stroke-width="1.4"/><path d="M11.5 13.8 L11.5 16.3" stroke="#111" stroke-width="1.4"/><path d="M9.9 13.1 L8.1 14.9" stroke="#111" stroke-width="1.4"/><path d="M9.2 11.5 L6.7 11.5" stroke="#111" stroke-width="1.4"/><path d="M9.9 9.9 L8.1 8.1" stroke="#111" stroke-width="1.4"/><path d="M11.5 9.2 L11.5 6.7" stroke="#111" stroke-width="1.4"/><path d="M13.1 9.9 L14.9 8.1" stroke="#111" stroke-width="1.4"/><circle cx="11.5" cy="11.5" r="2.8" fill="#c5c5c5" stroke="#111" stroke-width="1.6"/></svg>
<div class="a cmb" style="left:989px;top:150px;width:141px;height:21px;"><div class="t" style="left:4px;top:3px">Primitivas estándar</div></div>
<div class="a " style="left:1113px;top:152px;width:16px;height:17px;background:#ece9d8;border:1px solid;border-color:#fff #404040 #404040 #fff;box-shadow:inset -1px -1px 0 #8a8a8a"><svg style="left:3.5px;top:5.5px" width="7" height="4"><path d="M0 0H7L3.5 4Z" fill="#000"/></svg></div>
<div class="a " style="left:972px;top:178px;width:1px;height:601px;background:#8e8e8e"></div>
<div class="a " style="left:972px;top:778px;width:176px;height:1px;background:#f0f0f0"></div>
<div class="a " style="left:1146px;top:178px;width:1px;height:601px;background:#f0f0f0"></div>
<div class="a " style="left:972px;top:178px;width:175px;height:1px;background:#8e8e8e"></div>
<div class="a grp" style="left:975px;top:190px;width:164px;height:136px;"></div>
<div class="a roll" style="left:979px;top:183px;width:158px;height:16px;"><span style="position:absolute;left:6px;top:0">-</span>Tipo de objeto</div>
<div class="t" style="left:1025px;top:203px;color:#8c8c8c">CuadrAuto</div>
<div class="a " style="left:1084px;top:203px;width:13px;height:13px;background:#c5c5c5;border:1px solid;border-color:#6e6e6e #fff #fff #6e6e6e;box-shadow:inset 1px 1px 0 #8a8a8a"></div>
<div class="a btn" style="left:980px;top:220px;width:77px;height:18px;">Caja</div>
<div class="a btn" style="left:1059px;top:220px;width:77px;height:18px;">Cono</div>
<div class="a btn" style="left:980px;top:241px;width:77px;height:18px;">Esfera</div>
<div class="a btn" style="left:1059px;top:241px;width:77px;height:18px;">Geoesfera</div>
<div class="a btn" style="left:980px;top:262px;width:77px;height:18px;">Cilindro</div>
<div class="a btn" style="left:1059px;top:262px;width:77px;height:18px;">Tubo</div>
<div class="a btn" style="left:980px;top:284px;width:77px;height:18px;">Toroide</div>
<div class="a btn" style="left:1059px;top:284px;width:77px;height:18px;">Pirámide</div>
<div class="a btn" style="left:980px;top:305px;width:77px;height:18px;">Tetera</div>
<div class="a btn" style="left:1059px;top:305px;width:77px;height:18px;">Plano</div>
<div class="a grp" style="left:975px;top:341px;width:164px;height:42px;"></div>
<div class="a roll" style="left:979px;top:334px;width:158px;height:15px;line-height:13px"><span style="position:absolute;left:6px;top:0">-</span>Nombre y color</div>
<div class="a fld" style="left:981px;top:357px;width:133px;height:19px;"></div>
<div class="a " style="left:1118px;top:357px;width:17px;height:19px;background:#88063c;border:1px solid;border-color:#555 #fff #fff #555"></div>
<div class="a " style="left:0px;top:739px;width:968px;height:18px;background:#c5c5c5"></div>
<div class="a " style="left:0px;top:739px;width:16px;height:18px;background:#c5c5c5;border:1px solid;border-color:#fff #7a7a7a #7a7a7a #fff"><div class="t" style="left:3px;top:1px;font-size:12px">&lt;</div></div>
<div class="a " style="left:16px;top:739px;width:125px;height:18px;background:#c5c5c5;border:1px solid;border-color:#fff #000 #000 #fff;box-shadow:inset -1px -1px 0 #7a7a7a;text-align:center;line-height:17px;font-size:12px;letter-spacing:-0.2px">0 / 100</div>
<div class="a " style="left:141px;top:739px;width:16px;height:18px;background:#c5c5c5;border:1px solid;border-color:#fff #7a7a7a #7a7a7a #fff"><div class="t" style="left:4px;top:1px;font-size:12px">&gt;</div></div>
<div class="a " style="left:0px;top:757px;width:968px;height:1px;background:#e8e8e8"></div>
<div class="a " style="left:48px;top:759px;width:898px;height:25px;background:#c9c7c7"></div>
<div class="a " style="left:48px;top:783px;width:898px;height:2px;background:#dcdcdc"></div>
<div class="a" style="left:54px;top:759px;width:1px;height:24px;background:#787878"></div><div class="a" style="left:63px;top:759px;width:1px;height:10px;background:#787878"></div><div class="a" style="left:72px;top:759px;width:1px;height:10px;background:#787878"></div><div class="a" style="left:80px;top:759px;width:1px;height:10px;background:#787878"></div><div class="a" style="left:89px;top:759px;width:1px;height:10px;background:#787878"></div><div class="a" style="left:98px;top:759px;width:1px;height:10px;background:#787878"></div><div class="a" style="left:106px;top:759px;width:1px;height:10px;background:#787878"></div><div class="a" style="left:115px;top:759px;width:1px;height:10px;background:#787878"></div><div class="a" style="left:123px;top:759px;width:1px;height:10px;background:#787878"></div><div class="a" style="left:132px;top:759px;width:1px;height:10px;background:#787878"></div><div class="a" style="left:140px;top:759px;width:1px;height:24px;background:#787878"></div><div class="a" style="left:149px;top:759px;width:1px;height:10px;background:#787878"></div><div class="a" style="left:158px;top:759px;width:1px;height:10px;background:#787878"></div><div class="a" style="left:166px;top:759px;width:1px;height:10px;background:#787878"></div><div class="a" style="left:175px;top:759px;width:1px;height:10px;background:#787878"></div><div class="a" style="left:184px;top:759px;width:1px;height:10px;background:#787878"></div><div class="a" style="left:192px;top:759px;width:1px;height:10px;background:#787878"></div><div class="a" style="left:201px;top:759px;width:1px;height:10px;background:#787878"></div><div class="a" style="left:209px;top:759px;width:1px;height:10px;background:#787878"></div><div class="a" style="left:218px;top:759px;width:1px;height:10px;background:#787878"></div><div class="a" style="left:226px;top:759px;width:1px;height:24px;background:#787878"></div><div class="a" style="left:235px;top:759px;width:1px;height:10px;background:#787878"></div><div class="a" style="left:244px;top:759px;width:1px;height:10px;background:#787878"></div><div class="a" style="left:252px;top:759px;width:1px;height:10px;background:#787878"></div><div class="a" style="left:261px;top:759px;width:1px;height:10px;background:#787878"></div><div class="a" style="left:270px;top:759px;width:1px;height:10px;background:#787878"></div><div class="a" style="left:278px;top:759px;width:1px;height:10px;background:#787878"></div><div class="a" style="left:287px;top:759px;width:1px;height:10px;background:#787878"></div><div class="a" style="left:295px;top:759px;width:1px;height:10px;background:#787878"></div><div class="a" style="left:304px;top:759px;width:1px;height:10px;background:#787878"></div><div class="a" style="left:312px;top:759px;width:1px;height:24px;background:#787878"></div><div class="a" style="left:321px;top:759px;width:1px;height:10px;background:#787878"></div><div class="a" style="left:330px;top:759px;width:1px;height:10px;background:#787878"></div><div class="a" style="left:338px;top:759px;width:1px;height:10px;background:#787878"></div><div class="a" style="left:347px;top:759px;width:1px;height:10px;background:#787878"></div><div class="a" style="left:356px;top:759px;width:1px;height:10px;background:#787878"></div><div class="a" style="left:364px;top:759px;width:1px;height:10px;background:#787878"></div><div class="a" style="left:373px;top:759px;width:1px;height:10px;background:#787878"></div><div class="a" style="left:381px;top:759px;width:1px;height:10px;background:#787878"></div><div class="a" style="left:390px;top:759px;width:1px;height:10px;background:#787878"></div><div class="a" style="left:398px;top:759px;width:1px;height:24px;background:#787878"></div><div class="a" style="left:407px;top:759px;width:1px;height:10px;background:#787878"></div><div class="a" style="left:416px;top:759px;width:1px;height:10px;background:#787878"></div><div class="a" style="left:424px;top:759px;width:1px;height:10px;background:#787878"></div><div class="a" style="left:433px;top:759px;width:1px;height:10px;background:#787878"></div><div class="a" style="left:442px;top:759px;width:1px;height:10px;background:#787878"></div><div class="a" style="left:450px;top:759px;width:1px;height:10px;background:#787878"></div><div class="a" style="left:459px;top:759px;width:1px;height:10px;background:#787878"></div><div class="a" style="left:467px;top:759px;width:1px;height:10px;background:#787878"></div><div class="a" style="left:476px;top:759px;width:1px;height:10px;background:#787878"></div><div class="a" style="left:484px;top:759px;width:1px;height:24px;background:#787878"></div><div class="a" style="left:493px;top:759px;width:1px;height:10px;background:#787878"></div><div class="a" style="left:502px;top:759px;width:1px;height:10px;background:#787878"></div><div class="a" style="left:510px;top:759px;width:1px;height:10px;background:#787878"></div><div class="a" style="left:519px;top:759px;width:1px;height:10px;background:#787878"></div><div class="a" style="left:528px;top:759px;width:1px;height:10px;background:#787878"></div><div class="a" style="left:536px;top:759px;width:1px;height:10px;background:#787878"></div><div class="a" style="left:545px;top:759px;width:1px;height:10px;background:#787878"></div><div class="a" style="left:553px;top:759px;width:1px;height:10px;background:#787878"></div><div class="a" style="left:562px;top:759px;width:1px;height:10px;background:#787878"></div><div class="a" style="left:570px;top:759px;width:1px;height:24px;background:#787878"></div><div class="a" style="left:579px;top:759px;width:1px;height:10px;background:#787878"></div><div class="a" style="left:588px;top:759px;width:1px;height:10px;background:#787878"></div><div class="a" style="left:596px;top:759px;width:1px;height:10px;background:#787878"></div><div class="a" style="left:605px;top:759px;width:1px;height:10px;background:#787878"></div><div class="a" style="left:614px;top:759px;width:1px;height:10px;background:#787878"></div><div class="a" style="left:622px;top:759px;width:1px;height:10px;background:#787878"></div><div class="a" style="left:631px;top:759px;width:1px;height:10px;background:#787878"></div><div class="a" style="left:639px;top:759px;width:1px;height:10px;background:#787878"></div><div class="a" style="left:648px;top:759px;width:1px;height:10px;background:#787878"></div><div class="a" style="left:656px;top:759px;width:1px;height:24px;background:#787878"></div><div class="a" style="left:665px;top:759px;width:1px;height:10px;background:#787878"></div><div class="a" style="left:674px;top:759px;width:1px;height:10px;background:#787878"></div><div class="a" style="left:682px;top:759px;width:1px;height:10px;background:#787878"></div><div class="a" style="left:691px;top:759px;width:1px;height:10px;background:#787878"></div><div class="a" style="left:700px;top:759px;width:1px;height:10px;background:#787878"></div><div class="a" style="left:708px;top:759px;width:1px;height:10px;background:#787878"></div><div class="a" style="left:717px;top:759px;width:1px;height:10px;background:#787878"></div><div class="a" style="left:725px;top:759px;width:1px;height:10px;background:#787878"></div><div class="a" style="left:734px;top:759px;width:1px;height:10px;background:#787878"></div><div class="a" style="left:742px;top:759px;width:1px;height:24px;background:#787878"></div><div class="a" style="left:751px;top:759px;width:1px;height:10px;background:#787878"></div><div class="a" style="left:760px;top:759px;width:1px;height:10px;background:#787878"></div><div class="a" style="left:768px;top:759px;width:1px;height:10px;background:#787878"></div><div class="a" style="left:777px;top:759px;width:1px;height:10px;background:#787878"></div><div class="a" style="left:786px;top:759px;width:1px;height:10px;background:#787878"></div><div class="a" style="left:794px;top:759px;width:1px;height:10px;background:#787878"></div><div class="a" style="left:803px;top:759px;width:1px;height:10px;background:#787878"></div><div class="a" style="left:811px;top:759px;width:1px;height:10px;background:#787878"></div><div class="a" style="left:820px;top:759px;width:1px;height:10px;background:#787878"></div><div class="a" style="left:828px;top:759px;width:1px;height:24px;background:#787878"></div><div class="a" style="left:837px;top:759px;width:1px;height:10px;background:#787878"></div><div class="a" style="left:846px;top:759px;width:1px;height:10px;background:#787878"></div><div class="a" style="left:854px;top:759px;width:1px;height:10px;background:#787878"></div><div class="a" style="left:863px;top:759px;width:1px;height:10px;background:#787878"></div><div class="a" style="left:872px;top:759px;width:1px;height:10px;background:#787878"></div><div class="a" style="left:880px;top:759px;width:1px;height:10px;background:#787878"></div><div class="a" style="left:889px;top:759px;width:1px;height:10px;background:#787878"></div><div class="a" style="left:897px;top:759px;width:1px;height:10px;background:#787878"></div><div class="a" style="left:906px;top:759px;width:1px;height:10px;background:#787878"></div><div class="a" style="left:914px;top:759px;width:1px;height:24px;background:#787878"></div>
<div class="a " style="left:50px;top:759px;width:9px;height:25px;background:#8aa8c8;border:1px solid #5878a0;opacity:0.85"></div>
<div class="t" style="left:51px;top:771px;font-size:12px;line-height:13px;letter-spacing:-0.2px">0</div>
<div class="t" style="left:134px;top:771px;font-size:12px;line-height:13px;letter-spacing:-0.2px">10</div>
<div class="t" style="left:220px;top:771px;font-size:12px;line-height:13px;letter-spacing:-0.2px">20</div>
<div class="t" style="left:306px;top:771px;font-size:12px;line-height:13px;letter-spacing:-0.2px">30</div>
<div class="t" style="left:392px;top:771px;font-size:12px;line-height:13px;letter-spacing:-0.2px">40</div>
<div class="t" style="left:478px;top:771px;font-size:12px;line-height:13px;letter-spacing:-0.2px">50</div>
<div class="t" style="left:564px;top:771px;font-size:12px;line-height:13px;letter-spacing:-0.2px">60</div>
<div class="t" style="left:650px;top:771px;font-size:12px;line-height:13px;letter-spacing:-0.2px">70</div>
<div class="t" style="left:736px;top:771px;font-size:12px;line-height:13px;letter-spacing:-0.2px">80</div>
<div class="t" style="left:822px;top:771px;font-size:12px;line-height:13px;letter-spacing:-0.2px">90</div>
<div class="t" style="left:908px;top:771px;font-size:12px;line-height:13px;letter-spacing:-0.2px">100</div>
<svg style="left:13px;top:763px" width="18" height="16" viewBox="0 0 18 16"><rect x="0.5" y="0.5" width="16" height="5" fill="#fff" stroke="#000" stroke-width="1.2"/><path d="M2 3.5 q3 -2 6 0 t6 0" stroke="#000" stroke-width="0.8" fill="none"/><rect x="0.5" y="13" width="16" height="2.4" fill="#fff" stroke="#000" stroke-width="1"/><path d="M4.5 11.5 V7.5 M2.8 9 L4.5 7.2 L6.2 9 M12.5 7.5 V11.5 M10.8 10 L12.5 11.8 L14.2 10" stroke="#000" stroke-width="1.1" fill="none"/></svg>
<div class="a " style="left:0px;top:786px;width:300px;height:1px;background:#8a8a7a"></div>
<div class="a " style="left:2px;top:787px;width:298px;height:20px;background:#dcc3c3;border-left:1px solid #8a8a7a"></div>
<div class="a " style="left:0px;top:807px;width:300px;height:3px;background:#f4f0e4"></div>
<div class="a " style="left:2px;top:810px;width:298px;height:21px;background:#fff;border-left:2px solid #8a8a7a;border-top:1px solid #8a8a7a"></div>
<div class="a " style="left:302px;top:787px;width:2px;height:44px;border-left:1px solid #fff;border-right:1px solid #7a7a7a"></div>
<div class="a " style="left:305px;top:787px;width:2px;height:44px;border-left:1px solid #fff;border-right:1px solid #7a7a7a"></div>
<div class="a " style="left:307px;top:789px;width:639px;height:1px;background:#000"></div>
<div class="a " style="left:307px;top:790px;width:639px;height:18px;background:#e2e2e2"></div>
<div class="a " style="left:307px;top:808px;width:639px;height:1px;background:#f4f4f4"></div>
<div class="a " style="left:307px;top:813px;width:639px;height:1px;background:#8a8a8a"></div>
<div class="a " style="left:177px;top:818px;width:400px;height:13px;text-align:right;white-space:nowrap;line-height:13px;letter-spacing:-0.3px">Haga clic o haga clic y arrastre para seleccionar objetos</div>
<div class="a " style="left:969px;top:783px;width:183px;height:1px;background:#8a8a8a"></div>
<div class="vsep" style="left:953px;top:790px;height:16px"></div>
<div class="vsep" style="left:1025px;top:790px;height:16px"></div>
<div class="vsep" style="left:1054px;top:790px;height:16px"></div>
<div class="vsep" style="left:953px;top:811px;height:16px"></div>
<div class="vsep" style="left:1025px;top:811px;height:16px"></div>
<div class="vsep" style="left:1054px;top:811px;height:16px"></div>
<svg style="left:959px;top:793px" width="16" height="10" viewBox="0 0 16 10"><path d="M0 5 L6 0.5 V9.5Z M7 1 h1.6 v8 h-1.6z M10 1 h1.6 v8 h-1.6z M13 1 h1.4 v8 h-1.4z" fill="#000"/></svg>
<div class="a " style="left:981px;top:790px;width:16px;height:15px;border:2px solid #000;background:#d8d8d8"><svg style="left:3px;top:1.500px" width="7" height="8"><path d="M0 0 L7 4 L0 8Z" fill="#000"/></svg></div>
<svg style="left:996px;top:802px" width="4" height="4" viewBox="0 0 4 4"><path d="M4 0V4H0Z" fill="#000"/></svg>
<svg style="left:1004px;top:793px" width="16" height="10" viewBox="0 0 16 10"><path d="M16 5 L10 0.5 V9.5Z M7.4 1 h1.6 v8 h-1.6z M4.4 1 h1.6 v8 h-1.6z M1.6 1 h1.4 v8 h-1.4z" fill="#000"/></svg>
<svg style="left:1030px;top:793px" width="17" height="10" viewBox="0 0 17 10"><path d="M0 0.5 L6 5 L0 9.5Z M6 0.5 L12 5 L6 9.5Z M13.5 0.5 h2 v9 h-2z" fill="#000"/></svg>
<div class="a fld" style="left:956px;top:810px;width:68px;height:20px;"><div class="t" style="left:3px;top:3px;font-size:12px">0</div></div>
<svg style="left:1031px;top:813px" width="16" height="14" viewBox="0 0 16 14"><rect x="0.5" y="0.5" width="10" height="10" fill="#e0e0e0" stroke="#222"/><rect x="0.5" y="0.5" width="10" height="2.5" fill="#333"/><circle cx="9" cy="8.5" r="4" fill="#eee" stroke="#b02020" stroke-width="1"/><path d="M9 6 V8.5 H11" stroke="#b02020" stroke-width="0.9" fill="none"/></svg>
<svg style="left:1060px;top:790px" width="16" height="17" viewBox="0 0 16 17"><circle cx="5.5" cy="5.5" r="4.5" fill="#e8eef8" stroke="#222" stroke-width="1.1"/><path d="M9 9 L14 15" stroke="#2030b0" stroke-width="2.4"/></svg>
<svg style="left:1082px;top:789px" width="20" height="18" viewBox="0 0 20 18"><rect x="4.500" y="0.500" width="14" height="11" fill="none" stroke="#a02828"/><path d="M11.500 0.500 V11.500 M4.500 6 H18.500" stroke="#a02828"/><circle cx="5" cy="10" r="3.5" fill="#e8eef8" stroke="#2030a0" stroke-width="1"/><path d="M7.500 12.500 L11 16.500" stroke="#2030b0" stroke-width="2"/></svg>
<svg style="left:1105px;top:790px" width="18" height="16" viewBox="0 0 18 16"><path d="M0.500 4 V0.500 H4 M14 0.500 H17.500 V4 M17.500 12 V15.500 H14 M4 15.500 H0.500 V12" fill="none" stroke="#000" stroke-width="1.100"/><path d="M3.500 5.500 H11.500 V13.500 H3.500Z M3.500 5.500 L6.500 2.500 H14.500 V10.500 L11.500 13.500 M11.500 5.500 L14.500 2.500" fill="#d8dcf0" stroke="#2030a0" stroke-width="1"/></svg>
<svg style="left:1123px;top:803px" width="4" height="4" viewBox="0 0 4 4"><path d="M4 0V4H0Z" fill="#000"/></svg>
<svg style="left:1128px;top:789px" width="20" height="18" viewBox="0 0 20 18"><rect x="4.500" y="0.500" width="14" height="11" fill="none" stroke="#a02828"/><path d="M11.500 0.500 V11.500 M4.500 6 H18.500" stroke="#a02828"/><path d="M0.500 8.500 H7.500 V15.500 H0.500Z M0.500 8.500 L3 6 H10 V13 L7.500 15.500 M7.500 8.500 L10 6" fill="#d8dcf0" stroke="#2030a0" stroke-width="1"/></svg>
<svg style="left:1146px;top:803px" width="4" height="4" viewBox="0 0 4 4"><path d="M4 0V4H0Z" fill="#000"/></svg>
<svg style="left:1059px;top:811px" width="18" height="17" viewBox="0 0 18 17"><path d="M1 1.500 L16 8.500 L1 15.500Z" fill="#d0d0d0" stroke="#000" stroke-width="1.300"/><path d="M6 5 Q9 8.500 6 12" fill="none" stroke="#000" stroke-width="1"/></svg>
<svg style="left:1076px;top:825px" width="4" height="4" viewBox="0 0 4 4"><path d="M4 0V4H0Z" fill="#000"/></svg>
<svg style="left:1083px;top:811px" width="17" height="17" viewBox="0 0 17 17"><path d="M3 9 L1 6.500 L2.500 5.500 L5 8 V2.500 H6.800 V7 V1 H8.600 V7 V1.500 H10.400 V7.500 V3 H12.200 V8 L12.200 11 Q12 15.500 8 15.500 Q4.500 15.500 3 9Z" fill="#e4e4e4" stroke="#000" stroke-width="0.900"/></svg>
<svg style="left:1105px;top:811px" width="18" height="17" viewBox="0 0 18 17"><circle cx="8" cy="9" r="4.500" fill="none" stroke="#000" stroke-width="1"/><path d="M8 1 V9 L1.500 15 M8 9 H16" stroke="#2030a0" stroke-width="1.100" fill="none"/><path d="M8 0 l-2 3 h4z M17 9 l-3 -2 v4z M0.500 16 l1 -3.500 l2.500 2.500z" fill="#000"/></svg>
<svg style="left:1123px;top:825px" width="4" height="4" viewBox="0 0 4 4"><path d="M4 0V4H0Z" fill="#000"/></svg>
<svg style="left:1129px;top:811px" width="17" height="17" viewBox="0 0 17 17"><rect x="0.700" y="0.700" width="11" height="11" fill="#d8dcf0" stroke="#2030a0" stroke-width="1.300"/><rect x="8.500" y="8.500" width="7" height="7" fill="#c5c5c5" stroke="#000" stroke-width="1.100"/><path d="M3 3 L8 8 M3 6 V3 H6" stroke="#000" stroke-width="1" fill="none"/></svg>
<div class="a" style="left:187px;top:7px;width:367px;height:821px;border-radius:7px 7px 0 0;overflow:hidden;background:#c5c5c5"><div class="a" style="left:0;top:0;width:4px;height:821px;background:linear-gradient(90deg,#5a68d0 0px,#5a68d0 1px,#7480dc 1px,#7480dc 2px,#7690e0 2px,#7690e0 3px,#7088e0 3px,#7088e0 4px)"></div><div class="a" style="right:0;top:0;width:4px;height:821px;background:linear-gradient(90deg,#6e82e1 0px,#6e82e1 1px,#7689de 1px,#7689de 2px,#6c78d4 2px,#6c78d4 3px,#4b51bf 3px,#4b51bf 4px)"></div><div class="a" style="left:0;bottom:0;width:367px;height:4px;background:linear-gradient(180deg,#6e82e1 0px,#6e82e1 1px,#7689de 1px,#7689de 2px,#6c78d4 2px,#6c78d4 3px,#4b51bf 3px,#4b51bf 4px)"></div><div class="a" style="left:0;top:0;width:367px;height:30px;background:linear-gradient(180deg,#7b9ae8 0%,#9db5ec 5%,#9ab2ec 10%,#88a2e4 16%,#7b96df 22%,#7b96df 50%,#7e9de3 62%,#83a9ea 85%,#7d9be4 92%,#7688de 96%,#6c7cd8 100%)"></div><div class="a" style="left:4px;top:30px;width:359px;height:787px;background:#c5c5c5;overflow:hidden"><div class="a " style="left:0px;top:0px;width:359px;height:19px;background:#ece9d8"></div><div class="m" style="left:5px;top:3px;color:#aca899">Material</div><div class="m" style="left:55px;top:3px;color:#aca899">Exploración</div><div class="m" style="left:122px;top:3px;color:#aca899">Opciones</div><div class="m" style="left:178px;top:3px;color:#aca899">Utilidades</div><div class="a " style="left:5px;top:23px;width:308px;height:202px;background:#000"></div><div class="a " style="left:6px;top:24px;width:103px;height:101px;background:#333;border:3px solid #fff"></div><svg style="left:14.5px;top:31px" width="87" height="87" viewBox="0 0 87 87"><circle cx="43.5" cy="43.5" r="43.3" fill="url(#gSph)"/></svg><div class="a " style="left:110px;top:26px;width:99px;height:97px;background:#333;border:1px solid #e4e0cc"></div><svg style="left:116.5px;top:31px" width="87" height="87" viewBox="0 0 87 87"><circle cx="43.5" cy="43.5" r="43.3" fill="url(#gSph)"/></svg><div class="a " style="left:212px;top:26px;width:99px;height:97px;background:#333;border:1px solid #e4e0cc"></div><svg style="left:218.5px;top:31px" width="87" height="87" viewBox="0 0 87 87"><circle cx="43.5" cy="43.5" r="43.3" fill="url(#gSph)"/></svg><div class="a " style="left:8px;top:126px;width:99px;height:97px;background:#333;border:1px solid #e4e0cc"></div><svg style="left:14.5px;top:131px" width="87" height="87" viewBox="0 0 87 87"><circle cx="43.5" cy="43.5" r="43.3" fill="url(#gSph)"/></svg><div class="a " style="left:110px;top:126px;width:99px;height:97px;background:#333;border:1px solid #e4e0cc"></div><svg style="left:116.5px;top:131px" width="87" height="87" viewBox="0 0 87 87"><circle cx="43.5" cy="43.5" r="43.3" fill="url(#gSph)"/></svg><div class="a " style="left:212px;top:126px;width:99px;height:97px;background:#333;border:1px solid #e4e0cc"></div><svg style="left:218.5px;top:131px" width="87" height="87" viewBox="0 0 87 87"><circle cx="43.5" cy="43.5" r="43.3" fill="url(#gSph)"/></svg><div class="a " style="left:313px;top:23px;width:16px;height:202px;background:#c5c5c5;border-left:2px solid #ece9d8;border-right:2px solid #ece9d8"></div><div class="a " style="left:313px;top:23px;width:16px;height:17px;background:#ece9d8;border:1px solid;border-color:#fff #716f64 #716f64 #fff;box-shadow:inset -1px -1px 0 #aca899"><svg style="left:3px;top:5px" width="7" height="4"><path d="M0 4H7L3.500 0Z" fill="#000"/></svg></div><div class="a " style="left:313px;top:40px;width:16px;height:17px;background:#ece9d8;border:1px solid;border-color:#fff #716f64 #716f64 #fff;box-shadow:inset -1px -1px 0 #aca899"></div><div class="a " style="left:4px;top:226px;width:309px;height:16px;background:#c5c5c5;border-top:1px solid #ece9d8;border-bottom:2px solid #ece9d8"></div><div class="a " style="left:4px;top:226px;width:16px;height:16px;background:#ece9d8;border:1px solid;border-color:#fff #716f64 #716f64 #fff;box-shadow:inset -1px -1px 0 #aca899"><svg style="left:4px;top:3px" width="4" height="7"><path d="M4 0V7L0 3.500Z" fill="#000"/></svg></div><div class="a " style="left:20px;top:226px;width:17px;height:16px;background:#ece9d8;border:1px solid;border-color:#fff #716f64 #716f64 #fff;box-shadow:inset -1px -1px 0 #aca899"></div><svg style="left:336px;top:27px" width="15" height="15" viewBox="0 0 15 15"><circle cx="7" cy="7" r="6.5" fill="url(#gBall)" stroke="#222" stroke-width="0.8"/></svg><svg style="left:351px;top:41px" width="4" height="4" viewBox="0 0 4 4"><path d="M4 0V4H0Z" fill="#000"/></svg><div class="a " style="left:333px;top:49px;width:21px;height:22px;background:#f0c83c;border:1px solid;border-color:#8a7a3a #fff #fff #8a7a3a"></div><svg style="left:336px;top:53px" width="15" height="15" viewBox="0 0 15 15"><circle cx="7" cy="7" r="6.5" fill="url(#gBall)" stroke="#222" stroke-width="0.8"/><path d="M11 12 l3 2 l-1 -4z" fill="#ff0"/></svg><svg style="left:336px;top:76px" width="15" height="15" viewBox="0 0 15 15"><rect x="0" y="0" width="3" height="3" fill="#000"/><rect x="3" y="0" width="3" height="3" fill="#fff"/><rect x="6" y="0" width="3" height="3" fill="#000"/><rect x="9" y="0" width="3" height="3" fill="#fff"/><rect x="12" y="0" width="3" height="3" fill="#000"/><rect x="0" y="3" width="3" height="3" fill="#fff"/><rect x="3" y="3" width="3" height="3" fill="#000"/><rect x="6" y="3" width="3" height="3" fill="#fff"/><rect x="9" y="3" width="3" height="3" fill="#000"/><rect x="12" y="3" width="3" height="3" fill="#fff"/><rect x="0" y="6" width="3" height="3" fill="#000"/><rect x="3" y="6" width="3" height="3" fill="#fff"/><rect x="6" y="6" width="3" height="3" fill="#000"/><rect x="9" y="6" width="3" height="3" fill="#fff"/><rect x="12" y="6" width="3" height="3" fill="#000"/><rect x="0" y="9" width="3" height="3" fill="#fff"/><rect x="3" y="9" width="3" height="3" fill="#000"/><rect x="6" y="9" width="3" height="3" fill="#fff"/><rect x="9" y="9" width="3" height="3" fill="#000"/><rect x="12" y="9" width="3" height="3" fill="#fff"/><rect x="0" y="12" width="3" height="3" fill="#000"/><rect x="3" y="12" width="3" height="3" fill="#fff"/><rect x="6" y="12" width="3" height="3" fill="#000"/><rect x="9" y="12" width="3" height="3" fill="#fff"/><rect x="12" y="12" width="3" height="3" fill="#000"/></svg><svg style="left:336px;top:100px" width="15" height="15" viewBox="0 0 15 15"><rect x="0.5" y="0.5" width="14" height="13" fill="#808080" stroke="#333"/></svg><svg style="left:351px;top:114px" width="4" height="4" viewBox="0 0 4 4"><path d="M4 0V4H0Z" fill="#000"/></svg><svg style="left:336px;top:126px" width="15" height="12" viewBox="0 0 15 12"><rect x="0" y="0" width="2.2" height="11" fill="#ddd"/><rect x="2.2" y="0" width="2.2" height="11" fill="#e8e020"/><rect x="4.400" y="0" width="2.200" height="11" fill="#20d0d0"/><rect x="6.600" y="0" width="2.200" height="11" fill="#20c020"/><rect x="8.800" y="0" width="2.200" height="11" fill="#d020d0"/><rect x="11" y="0" width="2.200" height="11" fill="#d02020"/><rect x="13.200" y="0" width="1.800" height="11" fill="#2020d0"/><rect x="0" y="9" width="15" height="3" fill="#555"/></svg><svg style="left:335px;top:148px" width="18" height="18" viewBox="0 0 18 18"><g transform="rotate(-35 9 9)"><rect x="5" y="-1" width="8" height="20" fill="#eee" stroke="#111" stroke-width="1.2"/><path d="M5 4 H13 M5 9 H13 M5 14 H13" stroke="#111" stroke-width="1"/><rect x="7" y="0" width="4" height="3" fill="#777"/><rect x="7" y="5.5" width="4" height="3" fill="#777"/><rect x="7" y="10.500" width="4" height="3" fill="#777"/></g></svg><svg style="left:353px;top:162px" width="3" height="3" viewBox="0 0 3 3"><path d="M3 0V3H0Z" fill="#000"/></svg><svg style="left:336px;top:174px" width="17" height="15" viewBox="0 0 17 15"><rect x="0.500" y="0.500" width="10" height="9" fill="#fff" stroke="#2030a0"/><rect x="1" y="1" width="9" height="2.500" fill="#2030c0"/><circle cx="11" cy="10" r="4" fill="url(#gBall)" stroke="#111" stroke-width="0.600"/></svg><svg style="left:338px;top:197px" width="12" height="6" viewBox="0 0 12 6"><circle cx="3" cy="3" r="2.500" fill="#999"/><circle cx="9" cy="3" r="2.500" fill="#999"/></svg><div class="vsep" style="left:13px;top:251px;height:16px"></div><div class="vsep" style="left:64px;top:251px;height:16px"></div><div class="vsep" style="left:95px;top:251px;height:16px"></div><div class="vsep" style="left:126px;top:251px;height:16px"></div><div class="vsep" style="left:157px;top:251px;height:16px"></div><div class="vsep" style="left:188px;top:251px;height:16px"></div><div class="vsep" style="left:219px;top:251px;height:16px"></div><svg style="left:16px;top:251px" width="18" height="17" viewBox="0 0 18 17"><circle cx="10.500" cy="10" r="6" fill="url(#gBlue)" stroke="#012" stroke-width="0.600"/><path d="M1 1 L7 7 M7 3 V7 H3" stroke="#000" stroke-width="1.400" fill="none"/><circle cx="9" cy="8" r="1.300" fill="#8f8"/></svg><svg style="left:39px;top:251px" width="18" height="17" viewBox="0 0 18 17"><circle cx="5" cy="4.500" r="4" fill="#8a8a8a"/><path d="M4 14 L9 9 H17 L12 14Z M2 17 L7 12 H15 L10 17Z" fill="#b4b4b4" stroke="#8a8a8a" stroke-width="0.800"/><path d="M8 5 q5 0 5 5 l-2 -1 m2 1 l1.500 -2" stroke="#8a8a8a" stroke-width="1.200" fill="none"/></svg><svg style="left:71px;top:251px" width="17" height="17" viewBox="0 0 17 17"><circle cx="5" cy="4.500" r="4" fill="#8a8a8a"/><rect x="6.500" y="8.500" width="9" height="7" fill="#b8b8b8" stroke="#8a8a8a"/><path d="M3 9 V13 H6 M4.500 11 L6.500 13 L4.500 15" stroke="#8a8a8a" stroke-width="1.200" fill="none"/></svg><svg style="left:103px;top:252px" width="14" height="14" viewBox="0 0 14 14"><path d="M1 1 L13 13 M13 1 L1 13" stroke="#000" stroke-width="2.200"/></svg><svg style="left:133px;top:252px" width="16" height="14" viewBox="0 0 16 14"><circle cx="10" cy="5" r="4.800" fill="#8e8e8e"/><circle cx="5.500" cy="8.500" r="5" fill="#8e8e8e" stroke="#a8a8a8" stroke-width="0.600"/></svg><svg style="left:164px;top:251px" width="14" height="16" viewBox="0 0 14 16"><path d="M7 1 L3 7 M7 1 L11 7 M3 7 V12 M11 7 V12" stroke="#9a9a9a" stroke-width="1" fill="none"/><circle cx="7" cy="2.500" r="2" fill="#c5c5c5" stroke="#9a9a9a"/><circle cx="3" cy="13" r="1.800" fill="#c5c5c5" stroke="#9a9a9a"/><circle cx="11" cy="13" r="1.800" fill="#c5c5c5" stroke="#9a9a9a"/></svg><svg style="left:194px;top:250px" width="18" height="18" viewBox="0 0 18 18"><circle cx="4" cy="4" r="3.500" fill="url(#gBlue)"/><path d="M9 3 H14 V7 M12 5 L14 7.500 L16 5" stroke="#000" stroke-width="1.200" fill="none"/><rect x="7.500" y="8.500" width="9" height="9" fill="#111"/><rect x="9.500" y="9" width="5" height="3" fill="#f0e030"/><rect x="10" y="14" width="4" height="3.500" fill="#fff"/></svg><div class="a " style="left:225px;top:251px;width:18px;height:17px;background:#e0e0e0;border:1px solid;border-color:#6e6e6e #fff #fff #6e6e6e"><div style="position:absolute;left:3px;top:0;font:bold 14px/15px 'Liberation Sans',sans-serif;color:#2030a0">0</div></div><svg style="left:103px;top:278px" width="16" height="15" viewBox="0 0 16 15"><path d="M0.500 2.500 L3 0.500 L6.500 1.500 L8.500 4.500 L6 7.500 L2.500 6Z" fill="#111"/><path d="M5.200 5.600 L7.600 3.400 L13.500 10 L14.800 14.300 L10.800 12Z" fill="#fff" stroke="#111" stroke-width="1.100"/></svg><div class="a cmb" style="left:125px;top:275px;width:140px;height:20px;"><div class="t" style="left:3px;top:3px;">01 - Predeterminado</div></div><div class="a " style="left:9px;top:304px;width:340px;height:480px;border:1px solid;border-color:#8a8a8a #f4f4f4 #f4f4f4 #8a8a8a"></div><div class="a grp" style="left:12px;top:317px;width:330px;height:51px;"></div><div class="a roll" style="left:16px;top:309px;width:322px;height:16px;"><span style="position:absolute;left:6px;top:0">-</span><span style="position:absolute;left:77px;top:0;white-space:nowrap">Parámetros básicos de sombreador</span></div><div class="a cmb" style="left:26px;top:330px;width:127px;height:21px;"><div class="t" style="left:4px;top:4px;">Blinn</div></div><div class="a " style="left:135px;top:333px;width:16px;height:16px;background:#ece9d8;border:1px solid;border-color:#fff #404040 #404040 #fff;box-shadow:inset -1px -1px 0 #8a8a8a"><svg style="left:3.500px;top:5px" width="7" height="4"><path d="M0 0H7L3.500 4Z" fill="#000"/></svg></div><div class="a " style="left:179px;top:329px;width:13px;height:13px;background:#e2e2e2;border:1px solid;border-color:#6e6e6e #fff #fff #6e6e6e;box-shadow:inset 1px 1px 0 #444"></div><div class="t" style="left:197px;top:329px;">Alámb.</div><div class="a " style="left:179px;top:349px;width:13px;height:13px;background:#e2e2e2;border:1px solid;border-color:#6e6e6e #fff #fff #6e6e6e;box-shadow:inset 1px 1px 0 #444"></div><div class="t" style="left:197px;top:349px;">Mapa caras</div><div class="a grp" style="left:12px;top:383px;width:330px;height:198px;"></div><div class="a roll" style="left:16px;top:375px;width:322px;height:16px;"><span style="position:absolute;left:6px;top:0">-</span><span style="position:absolute;left:100px;top:0;white-space:nowrap">Parámetros básicos Blinn</span></div><div class="a grp" style="left:19px;top:397px;width:168px;height:82px;"></div><div class="a " style="left:23px;top:415px;width:18px;height:20px;background:#f0c840;border:1px solid;border-color:#808080 #fff #fff #808080;overflow:hidden"><svg style="left:0;top:0" width="16" height="18"><path d="M17 4.500 H10.500 Q7.500 4.500 7.500 7.500 V10 Q7.500 13 10.500 13 H17" fill="none" stroke="#fff" stroke-width="3"/><path d="M17 6.500 H11.500 Q9.500 6.500 9.500 8 V9.500 Q9.500 11 11.500 11" fill="none" stroke="#000" stroke-width="1.200"/><path d="M9 15 H17" stroke="#000" stroke-width="1.300"/></svg></div><div class="a " style="left:23px;top:440px;width:18px;height:20px;background:#c5c5c5;border:1px solid;border-color:#fff #707070 #707070 #fff;overflow:hidden"><svg style="left:0;top:0" width="16" height="18"><path d="M17 4.500 H10.500 Q7.500 4.500 7.500 7.500 V10 Q7.500 13 10.500 13 H17" fill="none" stroke="#fff" stroke-width="3"/><path d="M17 6.500 H10" stroke="#000" stroke-width="1.200"/><path d="M7.500 6 V12" stroke="#000" stroke-width="1" stroke-dasharray="1 1"/><path d="M9 15 H17" stroke="#000" stroke-width="1.300"/></svg></div><div class="t" style="left:46px;top:412px;">Ambiental:</div><div class="t" style="left:46px;top:434px;">Difusa:</div><div class="t" style="left:46px;top:454px;">Especular:</div><div class="a " style="left:103px;top:407px;width:45px;height:20px;background:#8e8e8e;border:1px solid #000"></div><div class="a " style="left:103px;top:430px;width:45px;height:20px;background:#8e8e8e;border:1px solid #000"></div><div class="a " style="left:103px;top:453px;width:45px;height:20px;background:#e6e6e6;border:1px solid #000"></div><div class="a btn" style="left:150px;top:433px;width:15px;height:16px;"></div><div class="a btn" style="left:150px;top:454px;width:15px;height:16px;"></div><div class="a " style="left:167px;top:419px;width:15px;height:16px;background:#f0c83c;border:1px solid;border-color:#8a7a3a #fff #fff #8a7a3a"><svg style="left:2px;top:1px" width="10" height="12"><path d="M2.500 6 V3.500 a2.500 2.500 0 0 1 5 0 V6" fill="none" stroke="#2030a0" stroke-width="1.400"/><rect x="1" y="5.500" width="8" height="6" fill="#2030a0"/><rect x="3" y="7.500" width="4" height="2" fill="#aab"/></svg></div><div class="a grp" style="left:191px;top:397px;width:60px;height:38px;"></div><div class="t" style="left:199px;top:391px;background:#c5c5c5;padding:0 2px">Autoiluminación</div><div class="a " style="left:199px;top:410px;width:13px;height:13px;background:#e2e2e2;border:1px solid;border-color:#6e6e6e #fff #fff #6e6e6e;box-shadow:inset 1px 1px 0 #444"></div><div class="t" style="left:217px;top:410px;">Color</div><div class="a grp" style="left:191px;top:439px;width:60px;height:40px;"></div><div class="t" style="left:198px;top:451px;">Opacidad:</div><div class="a grp" style="left:19px;top:489px;width:230px;height:86px;"></div><div class="t" style="left:26px;top:483px;background:#c5c5c5;padding:0 2px">Resaltes especulares</div><div class="t" style="left:32px;top:506px;">Nivel especular:</div><div class="a fld" style="left:118px;top:505px;width:30px;height:16px;"><div class="t" style="left:3px;top:1px">0</div></div><div class="a " style="left:149px;top:505px;width:11px;height:8px;background:#c5c5c5;border:1px solid;border-color:#e8e8e8 #707070 #707070 #e8e8e8"></div><div class="a " style="left:149px;top:513px;width:11px;height:8px;background:#c5c5c5;border:1px solid;border-color:#e8e8e8 #707070 #707070 #e8e8e8"></div><svg style="left:151px;top:508px" width="5" height="3" viewBox="0 0 5 3"><path d="M0 3H5L2.500 0Z" fill="#000"/></svg><svg style="left:151px;top:515px" width="5" height="3" viewBox="0 0 5 3"><path d="M0 0H5L2.500 3Z" fill="#000"/></svg><div class="a btn" style="left:169px;top:505px;width:15px;height:16px;"></div><div class="t" style="left:32px;top:529px;">Lustre:</div><div class="a fld" style="left:118px;top:528px;width:30px;height:16px;"><div class="t" style="left:3px;top:1px">10</div></div><div class="a " style="left:149px;top:528px;width:11px;height:8px;background:#c5c5c5;border:1px solid;border-color:#e8e8e8 #707070 #707070 #e8e8e8"></div><div class="a " style="left:149px;top:536px;width:11px;height:8px;background:#c5c5c5;border:1px solid;border-color:#e8e8e8 #707070 #707070 #e8e8e8"></div><svg style="left:151px;top:531px" width="5" height="3" viewBox="0 0 5 3"><path d="M0 3H5L2.500 0Z" fill="#000"/></svg><svg style="left:151px;top:538px" width="5" height="3" viewBox="0 0 5 3"><path d="M0 0H5L2.500 3Z" fill="#000"/></svg><div class="a btn" style="left:169px;top:528px;width:15px;height:16px;"></div><div class="t" style="left:32px;top:553px;">Debilitar:</div><div class="a fld" style="left:118px;top:552px;width:30px;height:16px;"><div class="t" style="left:3px;top:1px">0,1</div></div><div class="a " style="left:149px;top:552px;width:11px;height:8px;background:#c5c5c5;border:1px solid;border-color:#e8e8e8 #707070 #707070 #e8e8e8"></div><div class="a " style="left:149px;top:560px;width:11px;height:8px;background:#c5c5c5;border:1px solid;border-color:#e8e8e8 #707070 #707070 #e8e8e8"></div><svg style="left:151px;top:555px" width="5" height="3" viewBox="0 0 5 3"><path d="M0 3H5L2.500 0Z" fill="#000"/></svg><svg style="left:151px;top:562px" width="5" height="3" viewBox="0 0 5 3"><path d="M0 0H5L2.500 3Z" fill="#000"/></svg><div class="a roll" style="left:16px;top:588px;width:321px;height:16px;"><span style="position:absolute;left:5px;top:1px;font-weight:bold;font-size:12px">+</span>Parámetros extendidos</div><div class="a " style="left:12px;top:592px;width:3px;height:9px;border:1px solid #8a8a8a;border-right:none"></div><div class="a " style="left:338px;top:592px;width:3px;height:9px;border:1px solid #8a8a8a;border-left:none;border-top:none"></div><div class="a roll" style="left:16px;top:608px;width:320px;height:16px;"><span style="position:absolute;left:5px;top:1px;font-weight:bold;font-size:12px">+</span>Supermuestreo</div><div class="a " style="left:12px;top:612px;width:3px;height:9px;border:1px solid #8a8a8a;border-right:none"></div><div class="a " style="left:337px;top:612px;width:3px;height:9px;border:1px solid #8a8a8a;border-left:none;border-top:none"></div><div class="a roll" style="left:16px;top:628px;width:319px;height:16px;"><span style="position:absolute;left:5px;top:1px;font-weight:bold;font-size:12px">+</span>Mapas</div><div class="a " style="left:12px;top:632px;width:3px;height:9px;border:1px solid #8a8a8a;border-right:none"></div><div class="a " style="left:336px;top:632px;width:3px;height:9px;border:1px solid #8a8a8a;border-left:none;border-top:none"></div><div class="a roll" style="left:16px;top:648px;width:322px;height:16px;"><span style="position:absolute;left:5px;top:1px;font-weight:bold;font-size:12px">+</span>Propiedades dinámicas</div><div class="a " style="left:12px;top:652px;width:3px;height:9px;border:1px solid #8a8a8a;border-right:none"></div><div class="a " style="left:339px;top:652px;width:3px;height:9px;border:1px solid #8a8a8a;border-left:none;border-top:none"></div><div class="a roll" style="left:16px;top:668px;width:320px;height:16px;"><span style="position:absolute;left:5px;top:1px;font-weight:bold;font-size:12px">+</span>Conexión de mental ray</div><div class="a " style="left:12px;top:672px;width:3px;height:9px;border:1px solid #8a8a8a;border-right:none"></div><div class="a " style="left:337px;top:672px;width:3px;height:9px;border:1px solid #8a8a8a;border-left:none;border-top:none"></div></div><svg style="left:6px;top:9px" width="16" height="13" viewBox="0 0 16 13"><rect x="0.6" y="0.6" width="14.8" height="11.8" fill="#fff" stroke="#111" stroke-width="1.2"/><path d="M12.6 3.1 H6 Q2.700 3.100 2.700 6.500 Q2.700 9.900 6 9.900 H10.200 Q13 9.900 13 7.700 Q13 5.500 10.200 5.500 H7 Q5.500 5.500 5.500 6.600 Q5.500 7.700 7 7.700 H10.600" fill="none" stroke="#111" stroke-width="1.15"/></svg><div class="tt" style="left:26px;top:10px;color:#d6dff5;text-shadow:none">Editor de materiales - 01 - Predeterminado</div><div class="xpbtn" style="left:294px;top:6px;width:21px;height:21px;background:linear-gradient(135deg,#6488ee 0%,#4668e0 50%,#3a58d4 100%);border-color:#d0daf6;"><div class="a" style="left:4px;bottom:4px;width:7px;height:3px;background:#fff"></div></div><div class="xpbtn" style="left:317px;top:6px;width:21px;height:21px;background:linear-gradient(135deg,#7890e4,#647cd8);border-color:#8ca0e8;"><div class="a" style="left:4px;top:4px;right:4px;bottom:4px;border:1px solid #94a6ea;border-top-width:3px"></div></div><div class="xpbtn" style="left:340px;top:6px;width:21px;height:21px;background:linear-gradient(135deg,#c47c8c,#a85868);border-color:#d8cce4;"><svg style="left:0;top:0" width="19" height="19" viewBox="0 0 19 19"><path d="M4.5 4.5L14.5 14.5M14.5 4.5L4.5 14.5" stroke="#fff" stroke-width="2" stroke-linecap="square"/></svg></div></div>
<div class="a" style="left:589px;top:138px;width:361px;height:700px;border-radius:7px 7px 0 0;overflow:hidden;background:#c5c5c5"><div class="a" style="left:0;top:0;width:4px;height:700px;background:linear-gradient(90deg,#5a68d0 0px,#5a68d0 1px,#7480dc 1px,#7480dc 2px,#7690e0 2px,#7690e0 3px,#7088e0 3px,#7088e0 4px)"></div><div class="a" style="right:0;top:0;width:4px;height:700px;background:linear-gradient(90deg,#6e82e1 0px,#6e82e1 1px,#7689de 1px,#7689de 2px,#6c78d4 2px,#6c78d4 3px,#4b51bf 3px,#4b51bf 4px)"></div><div class="a" style="left:0;bottom:0;width:361px;height:4px;background:linear-gradient(180deg,#6e82e1 0px,#6e82e1 1px,#7689de 1px,#7689de 2px,#6c78d4 2px,#6c78d4 3px,#4b51bf 3px,#4b51bf 4px)"></div><div class="a" style="left:0;top:0;width:361px;height:30px;background:linear-gradient(180deg,#7b9ae8 0%,#9db5ec 5%,#9ab2ec 10%,#88a2e4 16%,#7b96df 22%,#7b96df 50%,#7e9de3 62%,#83a9ea 85%,#7d9be4 92%,#7688de 96%,#6c7cd8 100%)"></div><div class="a" style="left:4px;top:30px;width:353px;height:666px;background:#c5c5c5;overflow:hidden"><div class="a fld" style="left:5px;top:3px;width:115px;height:18px;"></div><div class="a " style="left:129px;top:3px;width:215px;height:18px;background:#c5c5c5;border:1px solid;border-color:#8a8a8a #fff #fff #8a8a8a"><div class="t" style="left:2px;top:1px;">Ninguno</div></div><div class="a " style="left:15px;top:26px;width:87px;height:120px;background:#cacaca;border:1px solid;border-color:#000 #f0f0f0 #f0f0f0 #000"></div><div class="a " style="left:129px;top:24px;width:20px;height:20px;background:#f0c83c;border:1px solid;border-color:#8a7a3a #fff #fff #8a7a3a"></div><svg style="left:132px;top:27px" width="14" height="14" viewBox="0 0 14 14"><path d="M4 2H14M4 5.500H14M4 9H14M4 12.500H14" stroke="#000" stroke-width="1.300"/><circle cx="1.500" cy="2" r="1.300" fill="#2030d0"/><circle cx="1.500" cy="5.500" r="1.300" fill="#20a020"/><circle cx="1.500" cy="9" r="1.300" fill="#2030d0"/><circle cx="1.500" cy="12.500" r="1.300" fill="#2030d0"/></svg><svg style="left:151px;top:26px" width="16" height="16" viewBox="0 0 16 16"><path d="M6 2.500H15M6 8H15M6 13.500H15" stroke="#000" stroke-width="1.200"/><circle cx="2.500" cy="2.500" r="2.300" fill="#2030d0"/><circle cx="2.500" cy="8" r="2.300" fill="#20c020"/><path d="M0.300 15.500 L2.500 11 L4.700 15.500Z" fill="#d02020"/></svg><svg style="left:175px;top:30px" width="7" height="7" viewBox="0 0 7 7"><circle cx="3.500" cy="3.500" r="3.300" fill="url(#gBlue)"/></svg><svg style="left:192px;top:27px" width="13" height="13" viewBox="0 0 13 13"><circle cx="6.500" cy="6.500" r="6.200" fill="url(#gBlue)"/><circle cx="5" cy="4.500" r="1.300" fill="#dff"/></svg><div class="vsep" style="left:219px;top:25px;height:17px"></div><svg style="left:230px;top:25px" width="18" height="18" viewBox="0 0 18 18"><circle cx="4" cy="4" r="3.500" fill="url(#gBlue)"/><path d="M3 16 L9 11 H17 L11 16Z" fill="#f0f0f0" stroke="#999" stroke-width="0.600"/><path d="M9.500 6.500 q0 -2.500 2.500 -2.500 q2.500 0 2.500 2.200 q0 1.800 -4.500 4.800 h5" stroke="#000" stroke-width="1.300" fill="none"/><path d="M7 15 l1 -4 l3 3z" fill="#000"/></svg><svg style="left:253px;top:27px" width="13" height="13" viewBox="0 0 13 13"><path d="M1 1 L12 12 M12 1 L1 12" stroke="#8a8a8a" stroke-width="1.800"/></svg><svg style="left:273px;top:25px" width="12" height="16" viewBox="0 0 12 16"><path d="M0.500 0.500 H8 L11.500 4 V15.500 H0.500Z" fill="#fff" stroke="#000"/><path d="M8 0.500 V4 H11.500" fill="none" stroke="#000"/><circle cx="6.500" cy="9.500" r="3.500" fill="url(#gBlue)"/></svg><div class="a " style="left:130px;top:48px;width:199px;height:620px;background:#e2e2e2;border:1px solid;border-color:#000 #f0ede0 #f0ede0 #000"></div><div class="a " style="left:329px;top:48px;width:18px;height:620px;background:#c5c5c5;border-left:2px solid #f0ede0;border-right:2px solid #f0ede0"></div><div class="a " style="left:331px;top:48px;width:15px;height:16px;background:#ece9d8;border:1px solid;border-color:#fff #404040 #404040 #fff;box-shadow:inset -1px -1px 0 #8a8a8a"><svg style="left:3px;top:4px" width="7" height="4"><path d="M0 4H7L3.500 0Z" fill="#000"/></svg></div><div class="a " style="left:331px;top:64px;width:15px;height:30px;background:#ece9d8;border:1px solid;border-color:#fff #404040 #404040 #fff;box-shadow:inset -1px -1px 0 #8a8a8a"></div></div><svg style="left:6px;top:9px" width="16" height="13" viewBox="0 0 16 13"><rect x="0.6" y="0.6" width="14.8" height="11.8" fill="#fff" stroke="#111" stroke-width="1.2"/><path d="M12.6 3.1 H6 Q2.700 3.100 2.700 6.500 Q2.700 9.900 6 9.900 H10.200 Q13 9.900 13 7.700 Q13 5.500 10.200 5.500 H7 Q5.500 5.500 5.500 6.600 Q5.500 7.700 7 7.700 H10.600" fill="none" stroke="#111" stroke-width="1.15"/></svg><div class="tt" style="left:25px;top:10px;color:#d6dff5;text-shadow:none">Visor de materiales/mapas - AecTempla...</div><div class="xpbtn" style="left:288px;top:6px;width:21px;height:21px;background:linear-gradient(135deg,#6488ee 0%,#4668e0 50%,#3a58d4 100%);border-color:#d0daf6;"><div class="a" style="left:4px;bottom:4px;width:7px;height:3px;background:#fff"></div></div><div class="xpbtn" style="left:311px;top:6px;width:21px;height:21px;background:linear-gradient(135deg,#6488ee 0%,#4668e0 50%,#3a58d4 100%);border-color:#d0daf6;"><div class="a" style="left:4px;top:4px;right:4px;bottom:4px;border:1px solid #fff;border-top-width:3px"></div></div><div class="xpbtn" style="left:334px;top:6px;width:21px;height:21px;background:linear-gradient(135deg,#c47c8c,#a85868);border-color:#d8cce4;"><svg style="left:0;top:0" width="19" height="19" viewBox="0 0 19 19"><path d="M4.5 4.5L14.5 14.5M14.5 4.5L4.5 14.5" stroke="#fff" stroke-width="2" stroke-linecap="square"/></svg></div></div>
<div class="a" style="left:424px;top:238px;width:563px;height:419px;border-radius:7px 7px 0 0;overflow:hidden;background:#c5c5c5"><div class="a" style="left:0;top:0;width:4px;height:419px;background:linear-gradient(90deg,#0019cf 0px,#0019cf 1px,#0a4ce4 1px,#0a4ce4 2px,#1664ec 2px,#1664ec 3px,#0a50e0 3px,#0a50e0 4px)"></div><div class="a" style="right:0;top:0;width:4px;height:419px;background:linear-gradient(90deg,#0a50e0 0px,#0a50e0 1px,#0a4cdc 1px,#0a4cdc 2px,#0030c4 2px,#0030c4 3px,#00129a 3px,#00129a 4px)"></div><div class="a" style="left:0;bottom:0;width:563px;height:4px;background:linear-gradient(180deg,#0a50e8 0px,#0a50e8 1px,#0846dc 1px,#0846dc 2px,#0020b8 2px,#0020b8 3px,#00129a 3px,#00129a 4px)"></div><div class="a" style="left:0;top:0;width:563px;height:30px;background:linear-gradient(180deg,#3d95ff 0%,#3d95ff 6%,#0a6cf4 9%,#0060ea 15%,#0058e4 25%,#0058e4 45%,#005ce8 60%,#0064f4 72%,#0068fa 86%,#0060f0 92%,#0048d8 96%,#0030c8 100%)"></div><div class="a" style="left:4px;top:30px;width:555px;height:385px;background:#c5c5c5;overflow:hidden"><div class="t" style="left:41px;top:13px;"><u>B</u>uscar en:</div><div class="a " style="left:99px;top:7px;width:260px;height:22px;background:#fff;border:1px solid;border-color:#6a7074 #fff #fff #6a7074;box-shadow:inset 1px 1px 0 #4a5054"></div><svg style="left:105px;top:11px" width="16" height="14" viewBox="0 0 16 14"><path d="M0.500 3 Q0.500 1 2.500 1 H6 L7.500 3 H14 Q15.500 3 15.500 5 V11.500 Q15.500 13.500 13.500 13.500 H2.500 Q0.500 13.500 0.500 11.500Z" fill="url(#gFolder)" stroke="#b08820" stroke-width="0.900"/><path d="M1 5.500 H15" stroke="#fff8c8" stroke-width="1"/></svg><div class="t" style="left:125px;top:12px;">matlibs</div><div class="a " style="left:342px;top:10px;width:16px;height:18px;background:#ece9d8;border:1px solid;border-color:#fff #404040 #404040 #fff;box-shadow:inset -1px -1px 0 #8a8a8a"><svg style="left:3.500px;top:6px" width="7" height="4"><path d="M0 0H7L3.500 4Z" fill="#000"/></svg></div><svg style="left:377px;top:13px" width="15" height="12" viewBox="0 0 15 12"><path d="M1.500 6.500 L7 1.500 V4.500 H14 V8.500 H7 V11.500Z" fill="#fff"/><path d="M0.500 5.500 L6 0.500 V3.500 H13 V7.500 H6 V10.500Z" fill="#b4b09c"/></svg><svg style="left:398px;top:11px" width="16" height="14" viewBox="0 0 16 14"><path d="M0.700 2.500 H2 L3 0.700 H6.500 L7.500 2.500 H15 V13.300 H0.700Z" fill="#f4f070" stroke="#000" stroke-width="1.300"/><path d="M7.500 6 V10 H12.500" stroke="#000" stroke-width="1.600" fill="none"/><path d="M4.500 7.500 L7.500 4 L10.500 7.500Z" fill="#000"/></svg><svg style="left:421px;top:9px" width="19" height="17" viewBox="0 0 19 17"><path d="M0.700 7.500 H2 L3 5.700 H6 L7 7.500 H11.500 V16.300 H0.700Z" fill="#f4f070" stroke="#000" stroke-width="1.300"/><path d="M12.500 0.500 V4 M12.500 7 V10 M8.500 5.500 H11 M14 5.500 H16.500 M9.500 2.500 L11.300 4.300 M13.700 6.700 L15.500 8.500 M15.500 2.500 L13.700 4.300" stroke="#222" stroke-width="0.900"/></svg><svg style="left:444px;top:11px" width="24" height="15" viewBox="0 0 24 15"><rect x="0.700" y="0.700" width="15" height="13" fill="#fff" stroke="#000" stroke-width="1.300"/><rect x="1.300" y="1.300" width="13.800" height="1.600" fill="#3060d0"/><g fill="#1030c0"><rect x="3" y="4.500" width="2" height="2"/><rect x="9.500" y="4.500" width="2" height="2"/><rect x="3" y="7.500" width="2" height="2"/><rect x="9.500" y="7.500" width="2" height="2"/><rect x="3" y="10.500" width="2" height="2"/><rect x="9.500" y="10.500" width="2" height="2"/></g><path d="M5.500 5.500 h2.500 M12 5.500 h2.500 M5.500 8.500 h2.500 M12 8.500 h2.500 M5.500 11.500 h2.500 M12 11.500 h2.500" stroke="#000" stroke-width="0.900"/><path d="M18 6 H23.600 L20.800 9Z" fill="#000"/></svg><div class="a " style="left:6px;top:36px;width:87px;height:338px;background:#ece9d8"></div><svg style="left:33px;top:39px" width="32" height="32" viewBox="0 0 32 32"><defs><linearGradient id="gDoc" x1="0" y1="0" x2="1" y2="0"><stop offset="0" stop-color="#8fa8ea"/><stop offset="0.6" stop-color="#cfdcf8"/><stop offset="1" stop-color="#f4f8ff"/></linearGradient></defs><path d="M1 1 H14 L20 7 V28 H1Z" fill="url(#gDoc)" stroke="#7c94d8" stroke-width="0.800"/><path d="M14 1 V7 H20Z" fill="#e8f0ff" stroke="#7c94d8" stroke-width="0.600"/><path d="M4 8H12M4 11H13M4 14H11M4 17H10M4 20H9" stroke="#a8bcf0" stroke-width="1"/><circle cx="19.500" cy="19" r="10" fill="#c8ccd4" stroke="#8890a0" stroke-width="1"/><circle cx="19.500" cy="19" r="7.600" fill="#dcecfc" stroke="#a8b4c8" stroke-width="0.600"/><path d="M19.500 19 L24 14.500 M19.500 19 L16 18" stroke="#222" stroke-width="1.600"/><g fill="#e04020"><rect x="19" y="12.300" width="1" height="1.500"/><rect x="19" y="24.200" width="1" height="1.500"/><rect x="12.800" y="18.500" width="1.500" height="1"/><rect x="24.800" y="18.500" width="1.500" height="1"/></g></svg><div class="a " style="left:6px;top:73px;width:87px;height:13px;text-align:center;line-height:13px;white-space:nowrap;letter-spacing:-0.2px">Documentos</div><div class="a " style="left:6px;top:86px;width:87px;height:13px;text-align:center;line-height:13px;white-space:nowrap;letter-spacing:-0.2px">recientes</div><svg style="left:33px;top:104px" width="32" height="32" viewBox="0 0 32 32"><path d="M1 5 L25 0.500 L28 23 L4 29Z" fill="#2468d8" stroke="#0c3c98" stroke-width="1"/><path d="M1 5 L25 0.500 L25.500 3 L1.500 7.500Z" fill="#5c98f0"/><path d="M5 10 Q5 7 9 6.500 L20 4.500 Q24 4 24.500 8 L26 19 Q26 22 22 23 L11 25.500 Q7 26 6.500 22Z" fill="#f0e8b8"/><path d="M10 9 L19 7 L21 20 L12 22Z" fill="#dce8fc" stroke="#6c94e0" stroke-width="0.800"/><path d="M16 16 L28 8.500" stroke="#7090d0" stroke-width="2.200"/><path d="M14.500 17 l2 -2 l1 2z" fill="#333"/><circle cx="28.500" cy="8" r="1.600" fill="#d82020"/></svg><div class="a " style="left:6px;top:138px;width:87px;height:13px;text-align:center;line-height:13px;white-space:nowrap;letter-spacing:-0.2px">Escritorio</div><svg style="left:33px;top:169px" width="32" height="32" viewBox="0 0 32 32"><path d="M9 9 L17 1 L27 8 L19 17Z" fill="#dce8fc" stroke="#88a8d8" stroke-width="0.800"/><path d="M12 9 l5 -5 l6 4 l-5 5z" fill="#b8d0f4" opacity="0.700"/><path d="M2 11 L8 8 L14 16 L28 12 L26 26 Q14 31 5 27Z" fill="#f4d460" stroke="#c8a030" stroke-width="0.900"/><path d="M2 11 L13 19 L28 12 L26 26 Q14 31 5 27Z" fill="#fbe890" stroke="#c8a030" stroke-width="0.700"/></svg><div class="a " style="left:6px;top:203px;width:87px;height:13px;text-align:center;line-height:13px;white-space:nowrap;letter-spacing:-0.2px">Mis documentos</div><svg style="left:33px;top:234px" width="32" height="32" viewBox="0 0 32 32"><path d="M17 5 L29 3 V22 L17 24Z" fill="#d8dce8" stroke="#8890a8" stroke-width="0.800"/><path d="M19 8 l8 -1.300 M19 11 l8 -1.300" stroke="#8890a8" stroke-width="1"/><circle cx="26.500" cy="19" r="0.900" fill="#30c030"/><path d="M1 5 L19 1.500 L20.500 18 L4 22Z" fill="#dfe6f2" stroke="#7c8cb0" stroke-width="0.900"/><path d="M3 6.500 L17.500 3.800 L18.700 16.600 L5.300 20Z" fill="#48a4f0"/><path d="M3 6.500 L17.500 3.800 L5.300 20Z" fill="#84ccff"/><path d="M9 21 L15 19.500 L16.500 25 H8.500Z" fill="#b8c0d8" stroke="#7c8cb0" stroke-width="0.600"/><ellipse cx="12.500" cy="27" rx="9" ry="3" fill="#c8cce0" stroke="#8890a8" stroke-width="0.600"/></svg><div class="a " style="left:6px;top:268px;width:87px;height:13px;text-align:center;line-height:13px;white-space:nowrap;letter-spacing:-0.2px">Mi PC</div><svg style="left:33px;top:299px" width="32" height="32" viewBox="0 0 32 32"><circle cx="9.500" cy="11" r="9" fill="#2470d8" stroke="#1850a0" stroke-width="0.700"/><path d="M4 4.500 Q9 2.500 11 6.500 Q8.500 10 11 14 Q7 16 5 19.500 Q0.500 13 4 4.500Z" fill="#38b048"/><path d="M12 7 L28 2.500 L29.500 19 L15 22.500Z" fill="#dfe6f2" stroke="#7c8cb0" stroke-width="0.900"/><path d="M14 8.300 L26.500 4.800 L27.700 17.800 L16.300 20.500Z" fill="#50acf4"/><path d="M14 8.300 L26.500 4.800 L16.300 20.500Z" fill="#8cd0ff"/><path d="M19 22 L25 20.500 L26 26 H18.500Z" fill="#b8c0d8" stroke="#7c8cb0" stroke-width="0.600"/><ellipse cx="22" cy="28" rx="8" ry="2.800" fill="#c8cce0" stroke="#8890a8" stroke-width="0.600"/></svg><div class="a " style="left:6px;top:333px;width:87px;height:13px;text-align:center;line-height:13px;white-space:nowrap;letter-spacing:-0.2px">Mis sitios de red</div><div class="a " style="left:99px;top:36px;width:450px;height:283px;background:#fff;border:1px solid #7f9db9"></div><svg style="left:102px;top:39px" width="15" height="16" viewBox="0 0 15 16"><path d="M0.500 0.500 H10 L13.500 4 V14.500 H0.500Z" fill="#fff" stroke="#808080"/><path d="M10 0.500 V4 H13.500" stroke="#808080" fill="none"/><path d="M14 4.500 V15 H1" stroke="#404040" fill="none" stroke-width="0.800"/><rect x="2.500" y="4.500" width="9" height="8" fill="#fff" stroke="#222"/><rect x="3" y="5" width="8" height="2.200" fill="#1830c0"/><path d="M4 10 l2.500 -1.600 v3.200z" fill="#d02020"/><circle cx="9" cy="10" r="1.600" fill="#20a040"/><circle cx="9" cy="10" r="0.800" fill="#2040d0"/></svg><div class="t" style="left:119px;top:41px;letter-spacing:-0.1px">AecTemplates.mat</div><svg style="left:102px;top:56px" width="15" height="16" viewBox="0 0 15 16"><path d="M0.500 0.500 H10 L13.500 4 V14.500 H0.500Z" fill="#fff" stroke="#808080"/><path d="M10 0.500 V4 H13.500" stroke="#808080" fill="none"/><path d="M14 4.500 V15 H1" stroke="#404040" fill="none" stroke-width="0.800"/><rect x="2.500" y="4.500" width="9" height="8" fill="#fff" stroke="#222"/><rect x="3" y="5" width="8" height="2.200" fill="#1830c0"/><path d="M4 10 l2.500 -1.600 v3.200z" fill="#d02020"/><circle cx="9" cy="10" r="1.600" fill="#20a040"/><circle cx="9" cy="10" r="0.800" fill="#2040d0"/></svg><div class="t" style="left:119px;top:58px;letter-spacing:-0.1px">Nature.mat</div><div class="t" style="left:101px;top:334px;"><u>N</u>ombre:</div><div class="t" style="left:102px;top:360px;">Tip<u>o</u>:</div><div class="a " style="left:168px;top:328px;width:290px;height:22px;background:#fff;border:1px solid;border-color:#6a7074 #fff #fff #6a7074;box-shadow:inset 1px 1px 0 #4a5054"><div class="a" style="left:3px;top:4px;width:1px;height:13px;background:#000"></div></div><div class="a " style="left:440px;top:330px;width:16px;height:18px;background:#ece9d8;border:1px solid;border-color:#fff #404040 #404040 #fff;box-shadow:inset -1px -1px 0 #8a8a8a"><svg style="left:3.500px;top:6px" width="7" height="4"><path d="M0 0H7L3.500 4Z" fill="#000"/></svg></div><div class="a " style="left:168px;top:356px;width:290px;height:21px;background:#e2e2e2;border:1px solid;border-color:#6a7074 #fff #fff #6a7074;box-shadow:inset 1px 1px 0 #4a5054"><div class="t" style="left:4px;top:4px;">Bibliotecas de materiales (*.mat)</div></div><div class="a " style="left:440px;top:358px;width:16px;height:17px;background:#ece9d8;border:1px solid;border-color:#fff #404040 #404040 #fff;box-shadow:inset -1px -1px 0 #8a8a8a"><svg style="left:3.500px;top:5.500px" width="7" height="4"><path d="M0 0H7L3.500 4Z" fill="#000"/></svg></div><div class="a btn" style="left:474px;top:328px;width:75px;height:22px;line-height:19px;border-color:#fff #404040 #404040 #fff;box-shadow:inset -1px -1px 0 #8a8a8a"><u>A</u>brir</div><div class="a btn" style="left:474px;top:354px;width:75px;height:22px;line-height:19px;border-color:#fff #404040 #404040 #fff;box-shadow:inset -1px -1px 0 #8a8a8a">Cancelar</div><div class="a " style="left:538px;top:372px;width:17px;height:13px;background:#ece9d8"><svg style="left:0;top:0" width="17" height="13"><path d="M5 13 L17 1 M9 13 L17 5 M13 13 L17 9" stroke="#b8b4a0" stroke-width="1.500"/><path d="M6 13 L17 2 M10 13 L17 6 M14 13 L17 10" stroke="#fff" stroke-width="0.800"/></svg></div></div><div class="tt" style="left:8px;top:10px;letter-spacing:-0.1px">Abrir biblioteca de materiales</div><div class="xpbtn" style="left:513px;top:6px;width:21px;height:21px;background:linear-gradient(135deg,#5c8cf4 0%,#2a5fe0 50%,#1d4cc8 100%);"><div class="a" style="left:0;top:0;right:0;bottom:0;text-align:center;color:#fff;font:bold 15px/17px 'Liberation Sans',sans-serif">?</div></div><div class="xpbtn" style="left:536px;top:6px;width:21px;height:21px;background:linear-gradient(135deg,#f08c6c 0%,#e04c2c 40%,#c83014 100%);"><svg style="left:0;top:0" width="19" height="19" viewBox="0 0 19 19"><path d="M4.5 4.5L14.5 14.5M14.5 4.5L4.5 14.5" stroke="#fff" stroke-width="2" stroke-linecap="square"/></svg></div></div>
<div class="a " style="left:0px;top:831px;width:1152px;height:33px;background:#fff"></div>
</body></html>
